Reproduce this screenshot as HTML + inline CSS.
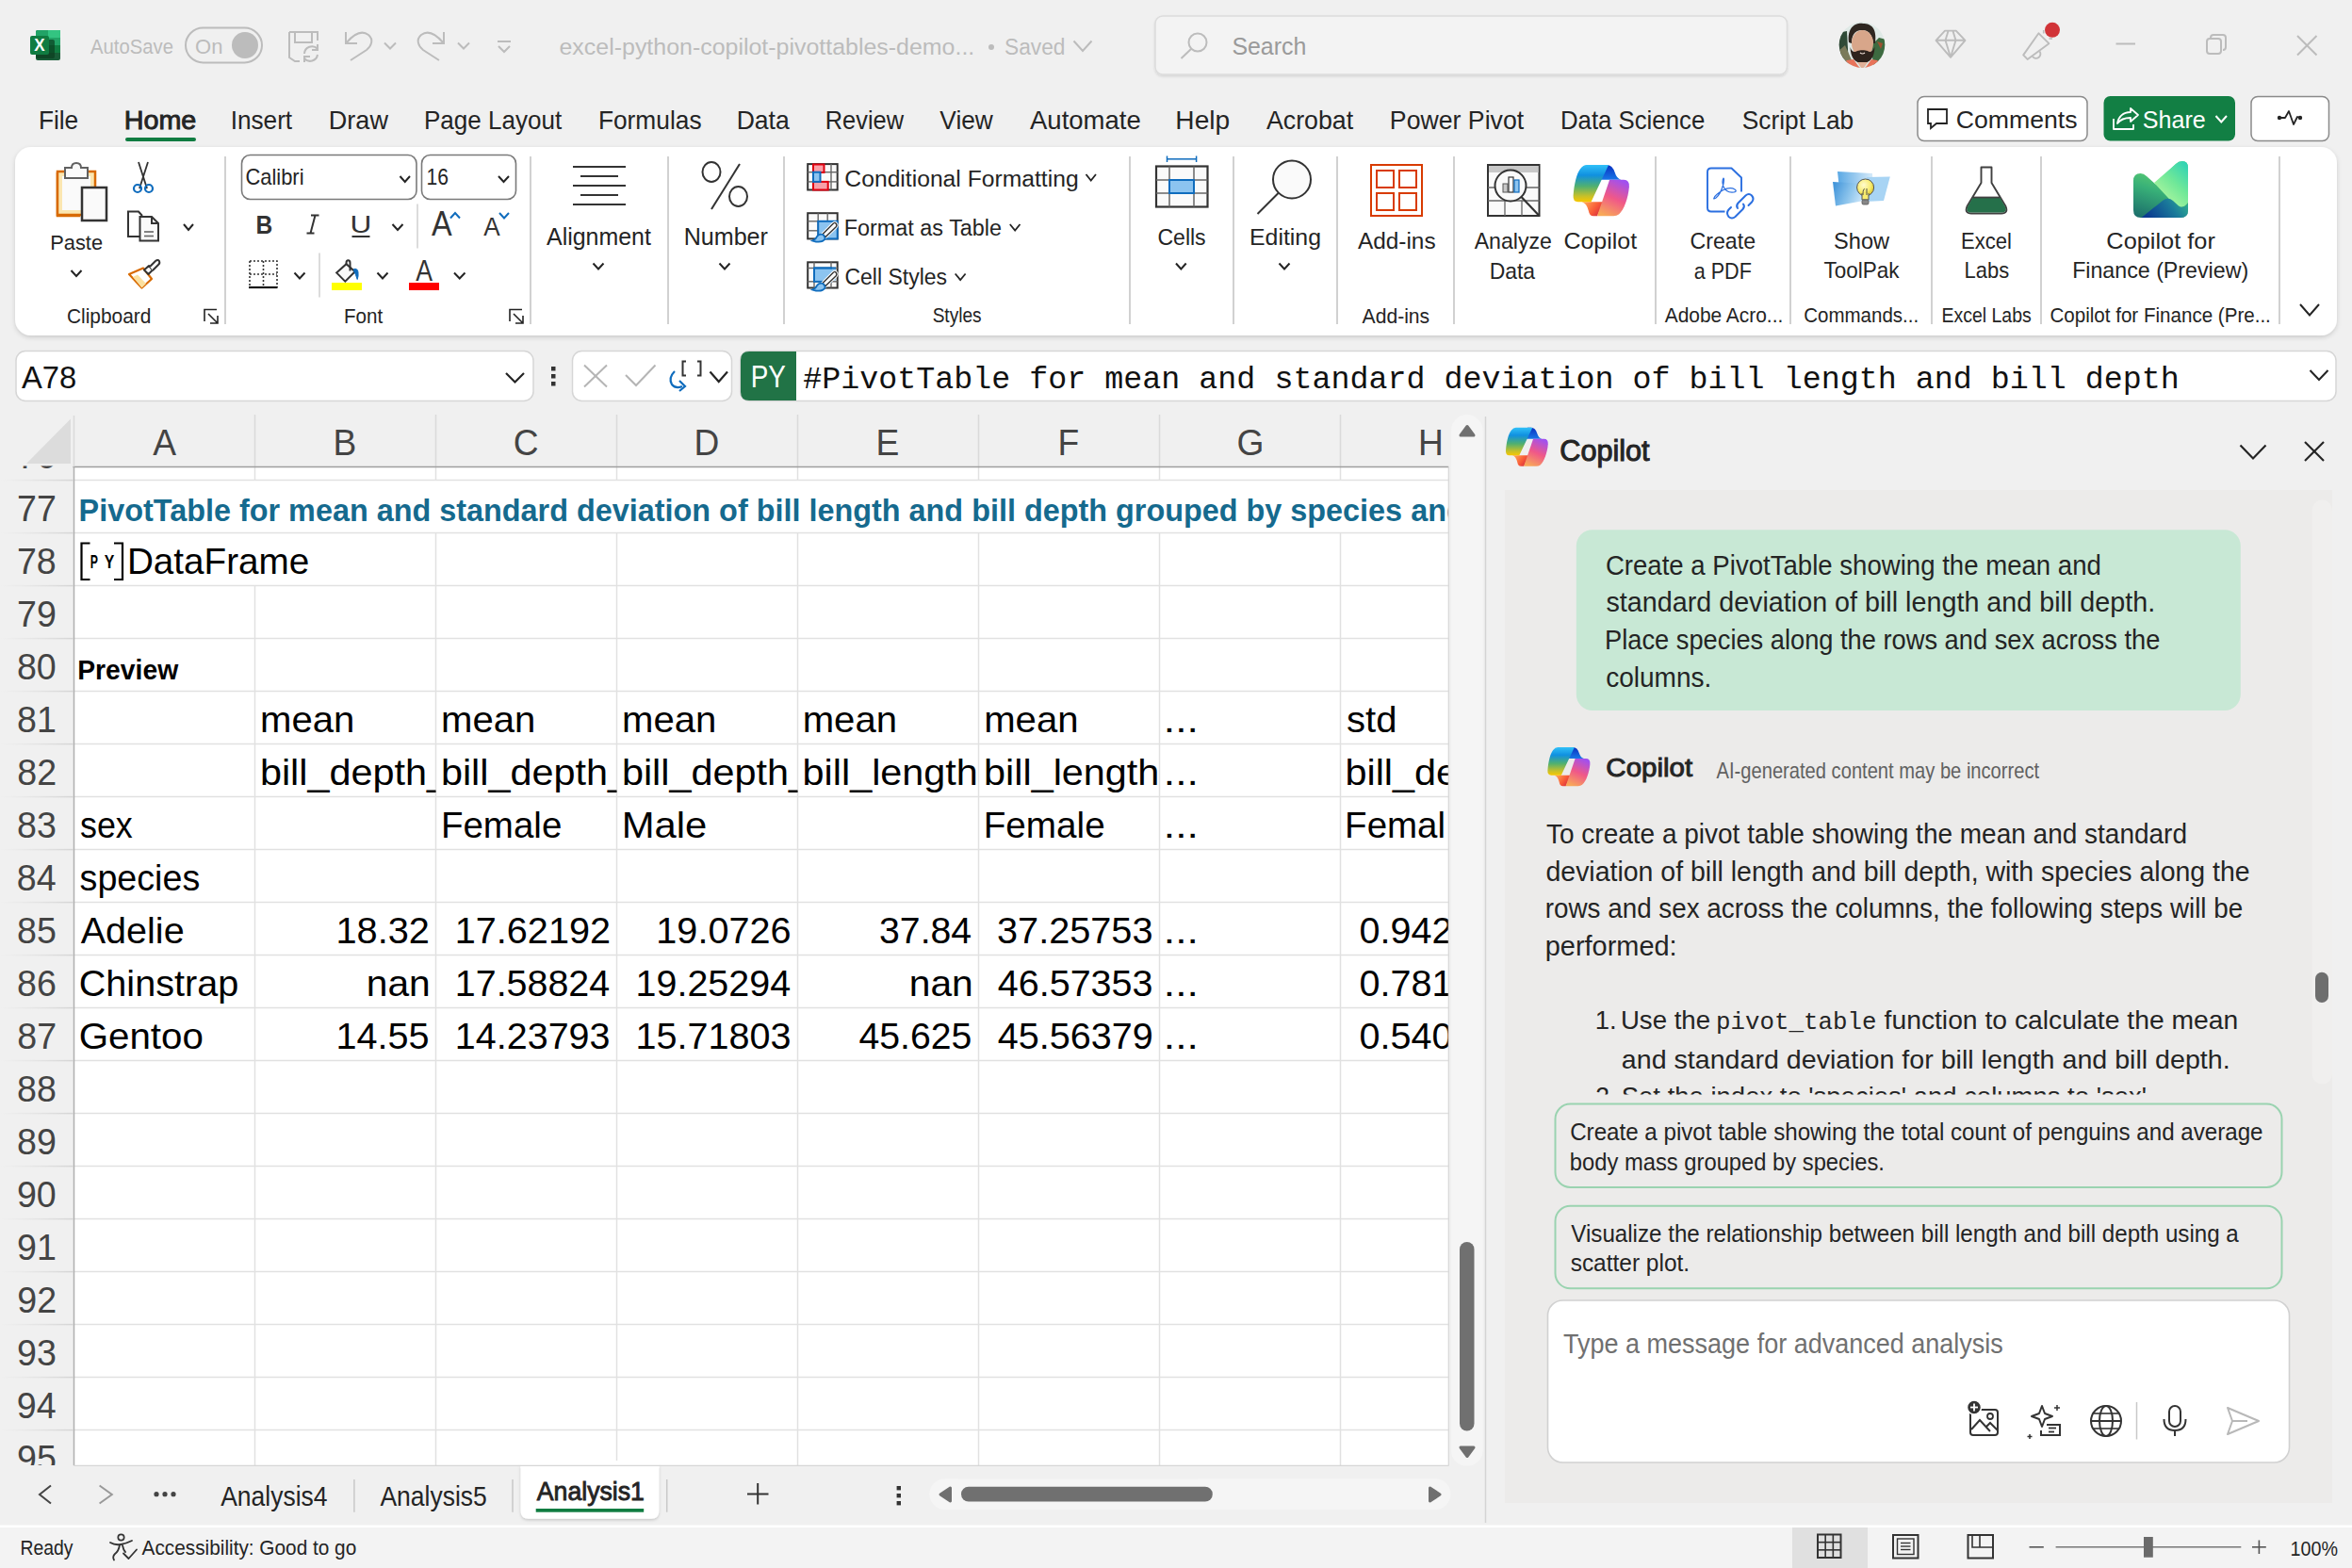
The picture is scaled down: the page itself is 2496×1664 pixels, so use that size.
<!DOCTYPE html>
<html><head><meta charset="utf-8"><title>Excel</title>
<style>html,body{margin:0;padding:0;background:#f0f0f0;overflow:hidden} svg{display:block} text{white-space:pre}</style>
</head><body>
<svg width="2496" height="1664" viewBox="0 0 2496 1664">
<defs>
<linearGradient id="xl1" x1="0" y1="0" x2="0" y2="1"><stop offset="0" stop-color="#21a366"/><stop offset="1" stop-color="#185c37"/></linearGradient>
<filter id="sh1" x="-5%" y="-20%" width="110%" height="160%"><feDropShadow dx="0" dy="1.5" stdDeviation="1" flood-color="#000" flood-opacity="0.12"/></filter>
<clipPath id="avc"><circle cx="1976" cy="47.6" r="24.3"/></clipPath>
<filter id="sh2" x="-2%" y="-10%" width="104%" height="130%"><feDropShadow dx="0" dy="2" stdDeviation="2.5" flood-color="#000" flood-opacity="0.16"/></filter>
<linearGradient id="cpA" gradientUnits="userSpaceOnUse" x1="0" y1="10" x2="0" y2="48.6"><stop offset="0" stop-color="#30c0f8"/><stop offset="0.28" stop-color="#1090e0"/><stop offset="0.58" stop-color="#50b070"/><stop offset="0.85" stop-color="#c8c028"/><stop offset="1" stop-color="#f8c800"/></linearGradient>
<linearGradient id="cpB" gradientUnits="userSpaceOnUse" x1="62" y1="27" x2="45" y2="64"><stop offset="0" stop-color="#a050f0"/><stop offset="0.5" stop-color="#f05888"/><stop offset="1" stop-color="#f8a858"/></linearGradient>
<linearGradient id="cpC" gradientUnits="userSpaceOnUse" x1="22" y1="50" x2="38" y2="62"><stop offset="0" stop-color="#ffa050"/><stop offset="0.6" stop-color="#f85a38"/><stop offset="1" stop-color="#d83040"/></linearGradient>
<linearGradient id="cpD" gradientUnits="userSpaceOnUse" x1="0" y1="10" x2="0" y2="26"><stop offset="0" stop-color="#0a30c0"/><stop offset="1" stop-color="#1878e8"/></linearGradient>
<linearGradient id="tp" x1="0" y1="0" x2="1" y2="0.3"><stop offset="0" stop-color="#3a90d8"/><stop offset="0.6" stop-color="#8cc4ec"/><stop offset="1" stop-color="#c8e4f8"/></linearGradient><linearGradient id="tp2" x1="0" y1="0" x2="1" y2="0"><stop offset="0" stop-color="#5aa8e4"/><stop offset="1" stop-color="#d8ecfa"/></linearGradient><radialGradient id="bulb" cx="0.4" cy="0.35" r="0.7"><stop offset="0" stop-color="#fffbd0"/><stop offset="0.6" stop-color="#f8ec70"/><stop offset="1" stop-color="#d8c020"/></radialGradient>
<linearGradient id="fin1" x1="0.3" y1="0" x2="0" y2="1"><stop offset="0" stop-color="#6ad870"/><stop offset="0.45" stop-color="#38b078"/><stop offset="1" stop-color="#1a6a6a"/></linearGradient><linearGradient id="fin3" x1="1" y1="0" x2="0.3" y2="1"><stop offset="0" stop-color="#28d0b8"/><stop offset="0.5" stop-color="#70e898"/><stop offset="1" stop-color="#b8f8a0"/></linearGradient><linearGradient id="fin2" x1="0" y1="0.5" x2="1" y2="0.2"><stop offset="0" stop-color="#0a3a90"/><stop offset="0.6" stop-color="#1a7a9a"/><stop offset="1" stop-color="#30b090"/></linearGradient>
<clipPath id="gridclip"><rect x="78.5" y="495.5" width="1458.8" height="1059.9"/></clipPath>
<linearGradient id="rhg" x1="0" y1="0" x2="1" y2="0"><stop offset="0" stop-color="#dcdcdc" stop-opacity="0"/><stop offset="1" stop-color="#d4d4d4"/></linearGradient>
<clipPath id="rhclip"><rect x="0" y="494.5" width="78" height="1060.5"/></clipPath>
<clipPath id="c0"><rect x="78.5" y="495.5" width="192.0" height="1059.9"/></clipPath>
<clipPath id="c1"><rect x="270.5" y="495.5" width="192.0" height="1059.9"/></clipPath>
<clipPath id="c2"><rect x="462.5" y="495.5" width="192.0" height="1059.9"/></clipPath>
<clipPath id="c3"><rect x="654.5" y="495.5" width="192.0" height="1059.9"/></clipPath>
<clipPath id="c4"><rect x="846.5" y="495.5" width="192.0" height="1059.9"/></clipPath>
<clipPath id="c5"><rect x="1038.5" y="495.5" width="192.0" height="1059.9"/></clipPath>
<clipPath id="c6"><rect x="1230.5" y="495.5" width="192.0" height="1059.9"/></clipPath>
<clipPath id="c7"><rect x="1422.5" y="495.5" width="192.0" height="1059.9"/></clipPath>
<clipPath id="cH83"><rect x="1422.5" y="495.5" width="110.5" height="1060"/></clipPath>
<clipPath id="cH"><rect x="1422.5" y="495.5" width="114.79999999999995" height="1059.9"/></clipPath>
<filter id="sh3" x="-10%" y="-10%" width="120%" height="140%"><feDropShadow dx="0" dy="1.5" stdDeviation="1.5" flood-color="#000" flood-opacity="0.18"/></filter>
<clipPath id="chatclip"><rect x="1597" y="520" width="1856" height="641"/></clipPath>
<clipPath id="msgclip"><rect x="1597" y="520" width="856" height="641.5"/></clipPath>
</defs>
<rect x="0" y="0" width="2496" height="1664" rx="0" fill="#f0f0f0"/>
<rect x="38" y="32" width="26" height="32" rx="2" fill="#185c37"/>
<rect x="38" y="32" width="26" height="8" rx="2" fill="#21a366"/>
<rect x="51" y="32" width="13" height="8" rx="0" fill="#33c481"/>
<rect x="38" y="40" width="26" height="8" rx="0" fill="#21a366"/>
<rect x="38" y="48" width="26" height="8" rx="0" fill="#107c41"/>
<rect x="38" y="42" width="20" height="20" rx="2" fill="#0b3d20" opacity="0.7"/>
<rect x="32" y="38" width="20" height="20" rx="2" fill="#107c41"/>
<text x="36.33" y="53.50" font-family="'Liberation Sans', sans-serif" font-size="18.84" font-weight="700" fill="#ffffff" textLength="11.38" lengthAdjust="spacingAndGlyphs">X</text>
<text x="96.00" y="57.00" font-family="'Liberation Sans', sans-serif" font-size="22.17" fill="#bcbcbc" textLength="87.94" lengthAdjust="spacingAndGlyphs">AutoSave</text>
<rect x="197" y="29.5" width="81" height="37" rx="18.5" fill="none" stroke="#bcbcbc" stroke-width="2"/>
<text x="207.01" y="57.00" font-family="'Liberation Sans', sans-serif" font-size="22.17" fill="#bcbcbc" textLength="29.40" lengthAdjust="spacingAndGlyphs">On</text>
<circle cx="260" cy="48" r="14" fill="#bcbcbc"/>
<path d="M307 34 L337 34 L337 43 M307 34 L307 61 L313 65 L318 65 M313 34 L313 45 L331 45 L331 34" fill="none" stroke="#bcbcbc" stroke-width="2"/>
<path d="M323 57 A8 8 0 0 1 337 52 M337 47 L337 53 L331 53 M337 58 A8 8 0 0 1 323 62 M323 66 L323 60 L329 60" fill="none" stroke="#bcbcbc" stroke-width="2"/>
<path d="M367 34 L367 46 L379 46 M368 45 C374 38 383 31 391 37 C397 42 394 49 389 53 L372 64" fill="none" stroke="#bcbcbc" stroke-width="2"/>
<path d="M408 45.5 L414.0 51.5 L420 45.5" fill="none" stroke="#bcbcbc" stroke-width="2" stroke-linecap="butt" stroke-linejoin="miter"/>
<path d="M471 34 L471 46 L459 46 M470 45 C464 38 455 31 447 37 C441 42 444 49 449 53 L466 64" fill="none" stroke="#bcbcbc" stroke-width="2"/>
<path d="M486 45.5 L492.0 51.5 L498 45.5" fill="none" stroke="#bcbcbc" stroke-width="2" stroke-linecap="butt" stroke-linejoin="miter"/>
<line x1="528" y1="44" x2="542" y2="44" stroke="#bcbcbc" stroke-width="2"/>
<path d="M529 49 L535.0 55 L541 49" fill="none" stroke="#bcbcbc" stroke-width="2" stroke-linecap="butt" stroke-linejoin="miter"/>
<text x="593.50" y="58.00" font-family="'Liberation Sans', sans-serif" font-size="24.64" fill="#bcbcbc" textLength="440.76" lengthAdjust="spacingAndGlyphs">excel-python-copilot-pivottables-demo...</text>
<circle cx="1052" cy="50" r="3" fill="#bcbcbc"/>
<text x="1065.98" y="57.80" font-family="'Liberation Sans', sans-serif" font-size="24.64" fill="#bcbcbc" textLength="64.52" lengthAdjust="spacingAndGlyphs">Saved</text>
<path d="M1139.5 43.5 L1149.0 54 L1158.5 43.5" fill="none" stroke="#bcbcbc" stroke-width="2" stroke-linecap="butt" stroke-linejoin="miter"/>
<rect x="1226" y="17" width="670.5" height="62" rx="8" fill="#f3f3f3" stroke="#dcdcdc" stroke-width="1.5" filter="url(#sh1)"/>
<circle cx="1271" cy="45" r="9.5" fill="none" stroke="#bcbcbc" stroke-width="2"/>
<line x1="1264" y1="52" x2="1253.5" y2="62" stroke="#bcbcbc" stroke-width="2"/>
<text x="1307.38" y="57.50" font-family="'Liberation Sans', sans-serif" font-size="25.36" fill="#9a9a9a" textLength="78.93" lengthAdjust="spacingAndGlyphs">Search</text>
<g clip-path="url(#avc)"><rect x="1950" y="22" width="52" height="52" fill="#dfe9e6"/><path d="M1950 35 L1960 33 L1962 72 L1950 72 Z" fill="#2f4a36"/><path d="M1950 55 L1958 48 L1966 66 L1950 72 Z" fill="#7a7a5a"/><path d="M1986 48 L1994 40 L2002 42 L2002 72 L1988 72 Z" fill="#3d6a40"/><path d="M1992 44 L1998 46 L1996 52 Z" fill="#a05030"/><path d="M1962 45 C1960 28 1970 24 1977 25 C1986 25 1992 30 1990 46 L1988 46 C1987 38 1984 32 1976 32 C1968 32 1965 38 1965 46 Z" fill="#2e2620"/><ellipse cx="1976.5" cy="46" rx="11.5" ry="14" fill="#d8a68a"/><path d="M1963.5 50 C1964 62 1969 67 1976.5 67 C1984 67 1989 62 1989.5 50 C1987 55 1984 56 1982 54 C1979 53 1974 53 1971 54 C1968 56 1965 55 1963.5 50 Z" fill="#2e231d"/><path d="M1974 56 Q1976.5 58 1979 56" stroke="#f0e0d8" stroke-width="1.2" fill="none"/><path d="M1948 74 L1960 64 L1967 63 L1972 70 L1976 74 Z M2004 74 L1992 64 L1986 63 L1981 70 L1977 74 Z" fill="#e8735a"/><path d="M1971 66 L1976.5 74 L1982 66 Z" fill="#e0b098"/></g>
<path d="M2054.5 42.8 L2064 32.6 L2075.8 32.6 L2085.5 42.8 L2070 60.8 Z M2054.5 42.8 L2085.5 42.8 M2067.5 33 L2064.5 42.8 L2070 60.8 L2075.5 42.8 L2072.5 33" fill="none" stroke="#bcbcbc" stroke-width="1.9" stroke-linejoin="round"/>
<path d="M2147.2 58.4 L2163.5 35.3 L2174.4 46.2 L2151.6 62.9 Z" fill="none" stroke="#bcbcbc" stroke-width="1.9" stroke-linejoin="round"/>
<path d="M2157 60 A4.3 4.3 0 1 0 2164.5 54.5" fill="none" stroke="#bcbcbc" stroke-width="1.9"/>
<line x1="2168.7" y1="32" x2="2168.7" y2="35.5" stroke="#bcbcbc" stroke-width="1.6"/>
<line x1="2174.5" y1="41" x2="2178" y2="41" stroke="#bcbcbc" stroke-width="1.6"/>
<circle cx="2178" cy="31.8" r="8" fill="#d13438"/>
<line x1="2245.5" y1="46.5" x2="2266" y2="46.5" stroke="#bcbcbc" stroke-width="2"/>
<rect x="2342" y="41" width="15" height="16" rx="3" fill="none" stroke="#bcbcbc" stroke-width="2"/>
<path d="M2346 41 L2346 40 Q2346 37 2349 37 L2359 37 Q2362 37 2362 40 L2362 50 Q2362 53 2359 53" fill="none" stroke="#bcbcbc" stroke-width="2"/>
<line x1="2438" y1="38" x2="2458.5" y2="58.5" stroke="#bcbcbc" stroke-width="2"/>
<line x1="2458.5" y1="38" x2="2438" y2="58.5" stroke="#bcbcbc" stroke-width="2"/>
<text x="40.90" y="137.00" font-family="'Liberation Sans', sans-serif" font-size="27.97" fill="#242424" textLength="42.32" lengthAdjust="spacingAndGlyphs">File</text>
<text x="131.70" y="137.00" font-family="'Liberation Sans', sans-serif" font-size="27.97" fill="#242424" textLength="76.67" lengthAdjust="spacingAndGlyphs" stroke="#242424" stroke-width="0.9">Home</text>
<text x="244.64" y="137.00" font-family="'Liberation Sans', sans-serif" font-size="27.97" fill="#242424" textLength="65.52" lengthAdjust="spacingAndGlyphs">Insert</text>
<text x="348.84" y="137.00" font-family="'Liberation Sans', sans-serif" font-size="27.97" fill="#242424" textLength="63.13" lengthAdjust="spacingAndGlyphs">Draw</text>
<text x="449.92" y="137.00" font-family="'Liberation Sans', sans-serif" font-size="27.97" fill="#242424" textLength="146.24" lengthAdjust="spacingAndGlyphs">Page Layout</text>
<text x="634.89" y="137.00" font-family="'Liberation Sans', sans-serif" font-size="27.97" fill="#242424" textLength="109.66" lengthAdjust="spacingAndGlyphs">Formulas</text>
<text x="781.68" y="137.00" font-family="'Liberation Sans', sans-serif" font-size="27.97" fill="#242424" textLength="56.09" lengthAdjust="spacingAndGlyphs">Data</text>
<text x="875.77" y="137.00" font-family="'Liberation Sans', sans-serif" font-size="27.97" fill="#242424" textLength="83.20" lengthAdjust="spacingAndGlyphs">Review</text>
<text x="997.37" y="137.00" font-family="'Liberation Sans', sans-serif" font-size="27.97" fill="#242424" textLength="56.42" lengthAdjust="spacingAndGlyphs">View</text>
<text x="1093.00" y="137.00" font-family="'Liberation Sans', sans-serif" font-size="27.97" fill="#242424" textLength="117.75" lengthAdjust="spacingAndGlyphs">Automate</text>
<text x="1247.35" y="137.00" font-family="'Liberation Sans', sans-serif" font-size="27.97" fill="#242424" textLength="57.82" lengthAdjust="spacingAndGlyphs">Help</text>
<text x="1344.00" y="137.00" font-family="'Liberation Sans', sans-serif" font-size="27.97" fill="#242424" textLength="92.17" lengthAdjust="spacingAndGlyphs">Acrobat</text>
<text x="1474.87" y="137.00" font-family="'Liberation Sans', sans-serif" font-size="27.97" fill="#242424" textLength="142.28" lengthAdjust="spacingAndGlyphs">Power Pivot</text>
<text x="1655.94" y="137.00" font-family="'Liberation Sans', sans-serif" font-size="27.97" fill="#242424" textLength="153.30" lengthAdjust="spacingAndGlyphs">Data Science</text>
<text x="1848.82" y="137.00" font-family="'Liberation Sans', sans-serif" font-size="27.97" fill="#242424" textLength="118.30" lengthAdjust="spacingAndGlyphs">Script Lab</text>
<rect x="133" y="146" width="75" height="4" rx="2" fill="#107c41"/>
<rect x="2035" y="102.5" width="180" height="47" rx="7" fill="#ffffff" stroke="#8a8a8a" stroke-width="1.5"/>
<path d="M2046 116 L2066 116 L2066 131 L2055 131 L2049 136 L2049 131 L2046 131 Z" fill="none" stroke="#242424" stroke-width="1.8" stroke-linejoin="miter"/>
<text x="2075.67" y="135.60" font-family="'Liberation Sans', sans-serif" font-size="25.51" fill="#242424" textLength="128.86" lengthAdjust="spacingAndGlyphs">Comments</text>
<rect x="2232.5" y="102" width="139.5" height="47.5" rx="7" fill="#127f44"/>
<path d="M2243 126 L2243 137 L2264 137 L2264 132 M2247 131 C2248 124 2253 119 2261 119 L2261 115 L2269 122 L2261 129 L2261 125 C2255 125 2250 127 2247 131 Z" fill="none" stroke="#ffffff" stroke-width="1.8" stroke-linejoin="round"/>
<text x="2273.87" y="135.60" font-family="'Liberation Sans', sans-serif" font-size="25.51" fill="#ffffff" textLength="66.95" lengthAdjust="spacingAndGlyphs">Share</text>
<path d="M2351.5 123 L2357.25 129.5 L2363 123" fill="none" stroke="#ffffff" stroke-width="2" stroke-linecap="butt" stroke-linejoin="miter"/>
<rect x="2389" y="102.5" width="82.5" height="47" rx="7" fill="#ffffff" stroke="#8a8a8a" stroke-width="1.5"/>
<path d="M2419 125 L2425 125 L2429 118 L2434 132 L2438 124 L2442 125" fill="none" stroke="#242424" stroke-width="1.8" stroke-linejoin="round"/>
<circle cx="2419" cy="125" r="2.2" fill="#242424"/><circle cx="2441" cy="125" r="2.2" fill="#242424"/>
<rect x="16" y="156" width="2464" height="200" rx="17" fill="#ffffff" filter="url(#sh2)"/>
<line x1="239" y1="166" x2="239" y2="344" stroke="#d1d1d1" stroke-width="2"/>
<line x1="563" y1="166" x2="563" y2="344" stroke="#d1d1d1" stroke-width="2"/>
<line x1="709" y1="166" x2="709" y2="344" stroke="#d1d1d1" stroke-width="2"/>
<line x1="832" y1="166" x2="832" y2="344" stroke="#d1d1d1" stroke-width="2"/>
<line x1="1199" y1="166" x2="1199" y2="344" stroke="#d1d1d1" stroke-width="2"/>
<line x1="1309" y1="166" x2="1309" y2="344" stroke="#d1d1d1" stroke-width="2"/>
<line x1="1419" y1="166" x2="1419" y2="344" stroke="#d1d1d1" stroke-width="2"/>
<line x1="1543" y1="166" x2="1543" y2="344" stroke="#d1d1d1" stroke-width="2"/>
<line x1="1757" y1="166" x2="1757" y2="344" stroke="#d1d1d1" stroke-width="2"/>
<line x1="1900" y1="166" x2="1900" y2="344" stroke="#d1d1d1" stroke-width="2"/>
<line x1="2050" y1="166" x2="2050" y2="344" stroke="#d1d1d1" stroke-width="2"/>
<line x1="2166" y1="166" x2="2166" y2="344" stroke="#d1d1d1" stroke-width="2"/>
<line x1="2419" y1="166" x2="2419" y2="344" stroke="#d1d1d1" stroke-width="2"/>
<text x="70.96" y="343.00" font-family="'Liberation Sans', sans-serif" font-size="21.74" fill="#242424" textLength="89.41" lengthAdjust="spacingAndGlyphs">Clipboard</text>
<text x="364.95" y="343.00" font-family="'Liberation Sans', sans-serif" font-size="21.74" fill="#242424" textLength="41.17" lengthAdjust="spacingAndGlyphs">Font</text>
<text x="989.64" y="342.00" font-family="'Liberation Sans', sans-serif" font-size="21.74" fill="#242424" textLength="51.99" lengthAdjust="spacingAndGlyphs">Styles</text>
<text x="1445.60" y="342.50" font-family="'Liberation Sans', sans-serif" font-size="21.74" fill="#242424" textLength="71.56" lengthAdjust="spacingAndGlyphs">Add-ins</text>
<text x="1766.70" y="342.00" font-family="'Liberation Sans', sans-serif" font-size="21.74" fill="#242424" textLength="125.57" lengthAdjust="spacingAndGlyphs">Adobe Acro...</text>
<text x="1914.28" y="342.30" font-family="'Liberation Sans', sans-serif" font-size="21.74" fill="#242424" textLength="121.90" lengthAdjust="spacingAndGlyphs">Commands...</text>
<text x="2060.44" y="342.30" font-family="'Liberation Sans', sans-serif" font-size="21.74" fill="#242424" textLength="95.27" lengthAdjust="spacingAndGlyphs">Excel Labs</text>
<text x="2175.47" y="342.30" font-family="'Liberation Sans', sans-serif" font-size="21.74" fill="#242424" textLength="234.36" lengthAdjust="spacingAndGlyphs">Copilot for Finance (Pre...</text>
<path d="M217 341 L217 328.5 L230 328.5" fill="none" stroke="#242424" stroke-width="1.6"/>
<path d="M221 333 L231 343 M223 343 L231 343 L231 335" fill="none" stroke="#242424" stroke-width="1.6"/>
<path d="M541 341 L541 328.5 L554 328.5" fill="none" stroke="#242424" stroke-width="1.6"/>
<path d="M545 333 L555 343 M547 343 L555 343 L555 335" fill="none" stroke="#242424" stroke-width="1.6"/>
<path d="M2441 323 L2451.0 334.5 L2461 323" fill="none" stroke="#242424" stroke-width="2" stroke-linecap="butt" stroke-linejoin="miter"/>
<path d="M61 183 L61 229 L84 229 L84 219" fill="none" stroke="#d86a00" stroke-width="2.5"/>
<rect x="61" y="182" width="40" height="46" rx="0" fill="#fbe6b0" stroke="#d86a00" stroke-width="2.5"/>
<rect x="66" y="187" width="30" height="36" rx="0" fill="#fafafa"/>
<path d="M69 178 L69 189 L93 189 L93 178 L86 178 Q86 173 81 173 Q76 173 76 178 Z" fill="#fafafa" stroke="#616161" stroke-width="2"/>
<rect x="87" y="199" width="26" height="35" rx="0" fill="#fafafa" stroke="#333333" stroke-width="2.5"/>
<text x="53.26" y="265.00" font-family="'Liberation Sans', sans-serif" font-size="21.74" fill="#242424" textLength="55.77" lengthAdjust="spacingAndGlyphs">Paste</text>
<path d="M75.5 287 L81.0 293 L86.5 287" fill="none" stroke="#242424" stroke-width="2" stroke-linecap="butt" stroke-linejoin="miter"/>
<path d="M147 172 L156 200 M157 172 L148 200" fill="none" stroke="#333" stroke-width="1.8"/>
<circle cx="146" cy="200" r="4" fill="none" stroke="#0f6cbd" stroke-width="2.2"/><circle cx="158" cy="200" r="4" fill="none" stroke="#0f6cbd" stroke-width="2.2"/>
<path d="M148 251 L136 251 L136 224.5 L147 224.5 L151 229" fill="none" stroke="#333" stroke-width="2"/>
<path d="M148.5 230 L161 230 L168 237 L168 255.5 L148.5 255.5 Z M161 230 L161 237 L168 237" fill="#fafafa" stroke="#333" stroke-width="2"/>
<line x1="153" y1="246" x2="163" y2="246" stroke="#666" stroke-width="1.6"/>
<line x1="153" y1="250.5" x2="163" y2="250.5" stroke="#666" stroke-width="1.6"/>
<path d="M195 238 L200.0 244 L205 238" fill="none" stroke="#242424" stroke-width="2" stroke-linecap="butt" stroke-linejoin="miter"/>
<path d="M137 291 L152 284.5 L161 296 L150.5 305.5 Z" fill="#ffffff" stroke="#d86a00" stroke-width="2.2" stroke-linejoin="round"/>
<path d="M141 294 L150.5 305.5 L155 301 L146 291.5 Z" fill="#fbe0a0"/>
<path d="M153 286.5 L157.5 291 L162 286.5 L158 282 Z" fill="#fafafa" stroke="#333" stroke-width="2" stroke-linejoin="round"/>
<path d="M159 283 L165 277 Q167.5 275 169 277 Q170 279.5 168 281 L162 287" fill="#fafafa" stroke="#333" stroke-width="2" stroke-linejoin="round"/>
<rect x="256.5" y="164.5" width="185.5" height="47" rx="9" fill="#ffffff" stroke="#7a7a7a" stroke-width="1.6"/>
<text x="260.40" y="196.20" font-family="'Liberation Sans', sans-serif" font-size="23.19" fill="#242424" textLength="62.11" lengthAdjust="spacingAndGlyphs">Calibri</text>
<path d="M424.5 187 L429.75 193 L435 187" fill="none" stroke="#242424" stroke-width="2" stroke-linecap="butt" stroke-linejoin="miter"/>
<rect x="447.5" y="164.5" width="100" height="47" rx="9" fill="#ffffff" stroke="#7a7a7a" stroke-width="1.6"/>
<text x="452.42" y="196.20" font-family="'Liberation Sans', sans-serif" font-size="23.19" fill="#242424" textLength="23.48" lengthAdjust="spacingAndGlyphs">16</text>
<path d="M529 187 L534.5 193 L540 187" fill="none" stroke="#242424" stroke-width="2" stroke-linecap="butt" stroke-linejoin="miter"/>
<text x="271.40" y="247.50" font-family="'Liberation Sans', sans-serif" font-size="27.25" font-weight="700" fill="#333" textLength="17.76" lengthAdjust="spacingAndGlyphs">B</text>
<path d="M330 228.5 L338.5 228.5 M325.5 247.5 L333.5 247.5 M334.5 228.5 L329.5 247.5" fill="none" stroke="#333" stroke-width="2"/>
<text x="371.63" y="247.00" font-family="'Liberation Sans', sans-serif" font-size="26.09" fill="#333" textLength="22.81" lengthAdjust="spacingAndGlyphs">U</text>
<line x1="373.5" y1="251" x2="392.5" y2="251" stroke="#333" stroke-width="2"/>
<path d="M416.5 238 L422.0 244 L427.5 238" fill="none" stroke="#242424" stroke-width="2" stroke-linecap="butt" stroke-linejoin="miter"/>
<line x1="443" y1="216.5" x2="443" y2="263.5" stroke="#d1d1d1" stroke-width="1.5"/>
<text x="458.00" y="249.70" font-family="'Liberation Sans', sans-serif" font-size="36.67" fill="#333" textLength="21.67" lengthAdjust="spacingAndGlyphs">A</text>
<path d="M478 231.5 L483.0 226 L488 231.5" fill="none" stroke="#0f6cbd" stroke-width="2" stroke-linecap="butt" stroke-linejoin="miter"/>
<text x="513.30" y="249.70" font-family="'Liberation Sans', sans-serif" font-size="28.55" fill="#333" textLength="17.45" lengthAdjust="spacingAndGlyphs">A</text>
<path d="M530 226 L535.0 231.5 L540 226" fill="none" stroke="#0f6cbd" stroke-width="2" stroke-linecap="butt" stroke-linejoin="miter"/>
<path d="M265 277 L294 277 L294 305 M265 277 L265 305 M265 291 L294 291 M279.5 277 L279.5 305" fill="none" stroke="#333" stroke-width="1.6" stroke-dasharray="2 2"/>
<line x1="264" y1="305" x2="294.5" y2="305" stroke="#111" stroke-width="2.2"/>
<path d="M312.5 289.5 L318.0 295.5 L323.5 289.5" fill="none" stroke="#242424" stroke-width="2" stroke-linecap="butt" stroke-linejoin="miter"/>
<line x1="339" y1="268.5" x2="339" y2="315.5" stroke="#d1d1d1" stroke-width="1.5"/>
<path d="M357.1 289.4 L367.5 280.2 L376.7 288.3 L366.3 298.6 Z" fill="#f8f8f8" stroke="#333" stroke-width="2" stroke-linejoin="miter"/>
<path d="M367.5 280.5 L367.5 279 Q367.5 276.3 369.5 276.3 Q371.5 276.3 371.5 279 L371.5 287.5" fill="none" stroke="#333" stroke-width="2"/>
<path d="M375.5 285.5 Q379.5 284.5 380 289 Q380.5 293 379.2 296.5 Q377.5 291 375.8 288 Z" fill="#0f6cbd" stroke="#0f6cbd" stroke-width="1"/>
<rect x="352" y="300" width="32" height="8" rx="0" fill="#ffff00"/>
<path d="M400.5 289.5 L406.0 295.5 L411.5 289.5" fill="none" stroke="#242424" stroke-width="2" stroke-linecap="butt" stroke-linejoin="miter"/>
<text x="441.30" y="298.00" font-family="'Liberation Sans', sans-serif" font-size="31.30" fill="#333" textLength="17.75" lengthAdjust="spacingAndGlyphs">A</text>
<rect x="434" y="300" width="32" height="8" rx="0" fill="#ff0000"/>
<path d="M482 289.5 L487.75 295.5 L493.5 289.5" fill="none" stroke="#242424" stroke-width="2" stroke-linecap="butt" stroke-linejoin="miter"/>
<line x1="608" y1="177" x2="664" y2="177" stroke="#333" stroke-width="2"/>
<line x1="616" y1="187" x2="656" y2="187" stroke="#333" stroke-width="2"/>
<line x1="608" y1="197" x2="664" y2="197" stroke="#333" stroke-width="2"/>
<line x1="616" y1="207" x2="656" y2="207" stroke="#333" stroke-width="2"/>
<line x1="608" y1="217" x2="664" y2="217" stroke="#333" stroke-width="2"/>
<text x="580.00" y="260.20" font-family="'Liberation Sans', sans-serif" font-size="25.22" fill="#242424" textLength="110.87" lengthAdjust="spacingAndGlyphs">Alignment</text>
<path d="M629.5 279.5 L635.0 285.5 L640.5 279.5" fill="none" stroke="#242424" stroke-width="2" stroke-linecap="butt" stroke-linejoin="miter"/>
<ellipse cx="755" cy="182.5" rx="9.5" ry="10.5" fill="none" stroke="#333" stroke-width="2"/>
<ellipse cx="783.5" cy="208.5" rx="9.5" ry="10.5" fill="none" stroke="#333" stroke-width="2"/>
<line x1="785" y1="174" x2="755" y2="222" stroke="#333" stroke-width="2"/>
<text x="725.69" y="260.20" font-family="'Liberation Sans', sans-serif" font-size="25.22" fill="#242424" textLength="89.23" lengthAdjust="spacingAndGlyphs">Number</text>
<path d="M763.5 279.5 L769.0 285.5 L774.5 279.5" fill="none" stroke="#242424" stroke-width="2" stroke-linecap="butt" stroke-linejoin="miter"/>
<rect x="857.2" y="174.1" width="31.5" height="27.4" rx="0" fill="#fafafa" stroke="#333" stroke-width="2"/>
<line x1="863" y1="174.1" x2="863" y2="201.5" stroke="#666" stroke-width="1.4"/>
<line x1="882" y1="174.1" x2="882" y2="201.5" stroke="#666" stroke-width="1.4"/>
<line x1="857.2" y1="182.7" x2="888.7" y2="182.7" stroke="#666" stroke-width="1.4"/>
<line x1="857.2" y1="192.9" x2="888.7" y2="192.9" stroke="#666" stroke-width="1.4"/>
<rect x="863" y="174.5" width="11.5" height="8.5" rx="0" fill="#f8a0a8" stroke="#e00010" stroke-width="2"/>
<rect x="863" y="192.9" width="15.7" height="8.6" rx="0" fill="#f8a0a8" stroke="#e00010" stroke-width="2"/>
<rect x="863" y="182.7" width="7.5" height="10.2" rx="0" fill="#8cc4f0" stroke="#0f6cbd" stroke-width="2"/>
<text x="896.37" y="197.80" font-family="'Liberation Sans', sans-serif" font-size="24.35" fill="#242424" textLength="248.26" lengthAdjust="spacingAndGlyphs">Conditional Formatting</text>
<path d="M1152.5 185 L1157.75 191.5 L1163 185" fill="none" stroke="#242424" stroke-width="1.8" stroke-linecap="butt" stroke-linejoin="miter"/>
<rect x="857.2" y="226.2" width="31.5" height="27.2" rx="0" fill="#fafafa" stroke="#333" stroke-width="2"/>
<line x1="868.2" y1="226.2" x2="868.2" y2="253.39999999999998" stroke="#666" stroke-width="1.4"/>
<line x1="878.2" y1="226.2" x2="878.2" y2="253.39999999999998" stroke="#666" stroke-width="1.4"/>
<line x1="857.2" y1="234.8" x2="888.7" y2="234.8" stroke="#666" stroke-width="1.4"/>
<line x1="857.2" y1="244.8" x2="888.7" y2="244.8" stroke="#666" stroke-width="1.4"/>
<rect x="868.2" y="234.8" width="20.5" height="18.6" rx="0" fill="#8cc4f0" stroke="#0f6cbd" stroke-width="2"/>
<path d="M887 237 Q889 239 887 241 L876 251.5 L873 248.5 L884 237.5 Q886 235.5 887 237 Z" fill="#fafafa" stroke="#ffffff" stroke-width="3.2"/>
<path d="M887 237 Q889 239 887 241 L876 251.5 L873 248.5 L884 237.5 Q886 235.5 887 237 Z" fill="#fafafa" stroke="#333" stroke-width="1.4"/>
<path d="M873.5 249 Q876 252 875.5 253.5 Q873 257.5 866 256.5 Q863 256 862 255.5 Q866 254 867 251 Q869 247.5 873.5 249 Z" fill="#8cc4f0" stroke="#0f6cbd" stroke-width="1.8"/>
<text x="895.73" y="249.90" font-family="'Liberation Sans', sans-serif" font-size="24.35" fill="#242424" textLength="167.36" lengthAdjust="spacingAndGlyphs">Format as Table</text>
<path d="M1071.8 238 L1077.15 244.5 L1082.5 238" fill="none" stroke="#242424" stroke-width="1.8" stroke-linecap="butt" stroke-linejoin="miter"/>
<rect x="857.2" y="278.3" width="31.5" height="27.2" rx="0" fill="#fafafa" stroke="#333" stroke-width="2"/>
<line x1="864" y1="278.3" x2="864" y2="305.5" stroke="#666" stroke-width="1.4"/>
<line x1="882" y1="278.3" x2="882" y2="305.5" stroke="#666" stroke-width="1.4"/>
<line x1="857.2" y1="284.5" x2="888.7" y2="284.5" stroke="#666" stroke-width="1.4"/>
<line x1="857.2" y1="298.8" x2="888.7" y2="298.8" stroke="#666" stroke-width="1.4"/>
<rect x="864" y="284.5" width="18" height="14.3" rx="0" fill="#8cc4f0" stroke="#0f6cbd" stroke-width="2"/>
<rect x="865" y="285.5" width="22" height="12" rx="0" fill="#8cc4f0"/>
<line x1="864" y1="284.5" x2="887" y2="284.5" stroke="#0f6cbd" stroke-width="2"/>
<path d="M887 289 Q889 291 887 293 L876 303.5 L873 300.5 L884 289.5 Q886 287.5 887 289 Z" fill="#fafafa" stroke="#ffffff" stroke-width="3.2"/>
<path d="M887 289 Q889 291 887 293 L876 303.5 L873 300.5 L884 289.5 Q886 287.5 887 289 Z" fill="#fafafa" stroke="#333" stroke-width="1.4"/>
<path d="M873.5 301 Q876 304 875.5 305.5 Q873 309.5 866 308.5 Q863 308 862 307.5 Q866 306 867 303 Q869 299.5 873.5 301 Z" fill="#8cc4f0" stroke="#0f6cbd" stroke-width="1.8"/>
<text x="896.45" y="302.00" font-family="'Liberation Sans', sans-serif" font-size="24.35" fill="#242424" textLength="108.63" lengthAdjust="spacingAndGlyphs">Cell Styles</text>
<path d="M1013.7 290.5 L1019.15 297 L1024.6 290.5" fill="none" stroke="#242424" stroke-width="1.8" stroke-linecap="butt" stroke-linejoin="miter"/>
<rect x="1227" y="176.5" width="54.5" height="43" rx="0" fill="#fafafa" stroke="#333" stroke-width="2.2"/>
<line x1="1241" y1="176.5" x2="1241" y2="219.5" stroke="#666" stroke-width="1.5"/>
<line x1="1267" y1="176.5" x2="1267" y2="219.5" stroke="#666" stroke-width="1.5"/>
<line x1="1227" y1="191" x2="1281.5" y2="191" stroke="#666" stroke-width="1.5"/>
<line x1="1227" y1="205" x2="1281.5" y2="205" stroke="#666" stroke-width="1.5"/>
<rect x="1241" y="191" width="26" height="14" rx="0" fill="#8cc4f0" stroke="#0f6cbd" stroke-width="2"/>
<line x1="1238.5" y1="168.8" x2="1269.6" y2="168.8" stroke="#0f6cbd" stroke-width="1.5"/>
<line x1="1238.5" y1="165.5" x2="1238.5" y2="172" stroke="#0f6cbd" stroke-width="1.5"/>
<line x1="1269.6" y1="165.5" x2="1269.6" y2="172" stroke="#0f6cbd" stroke-width="1.5"/>
<text x="1228.45" y="259.60" font-family="'Liberation Sans', sans-serif" font-size="23.91" fill="#242424" textLength="51.21" lengthAdjust="spacingAndGlyphs">Cells</text>
<path d="M1248 279.5 L1253.35 285.5 L1258.7 279.5" fill="none" stroke="#242424" stroke-width="2" stroke-linecap="butt" stroke-linejoin="miter"/>
<circle cx="1371" cy="190.5" r="20" fill="#fafafa" stroke="#333" stroke-width="2"/>
<line x1="1356.5" y1="205" x2="1334.5" y2="227" stroke="#333" stroke-width="2"/>
<text x="1326.01" y="259.60" font-family="'Liberation Sans', sans-serif" font-size="23.91" fill="#242424" textLength="75.97" lengthAdjust="spacingAndGlyphs">Editing</text>
<path d="M1357.5 279.5 L1363.0 285.5 L1368.5 279.5" fill="none" stroke="#242424" stroke-width="2" stroke-linecap="butt" stroke-linejoin="miter"/>
<rect x="1455" y="175" width="54" height="54" rx="0" fill="none" stroke="#d83b01" stroke-width="2"/>
<rect x="1461" y="181" width="18" height="18" rx="0" fill="none" stroke="#d83b01" stroke-width="2"/>
<rect x="1485" y="181" width="18" height="18" rx="0" fill="none" stroke="#d83b01" stroke-width="2"/>
<rect x="1461" y="205" width="18" height="18" rx="0" fill="none" stroke="#d83b01" stroke-width="2"/>
<rect x="1485" y="205" width="18" height="18" rx="0" fill="none" stroke="#d83b01" stroke-width="2"/>
<text x="1441.00" y="263.50" font-family="'Liberation Sans', sans-serif" font-size="23.91" fill="#242424" textLength="82.57" lengthAdjust="spacingAndGlyphs">Add-ins</text>
<rect x="1579" y="175" width="54.5" height="54" rx="0" fill="#fafafa" stroke="#333" stroke-width="2"/>
<rect x="1580" y="176" width="52.5" height="7" rx="0" fill="#c8c8c8"/>
<line x1="1579" y1="199" x2="1633.5" y2="199" stroke="#666" stroke-width="1.3"/>
<line x1="1579" y1="213" x2="1633.5" y2="213" stroke="#666" stroke-width="1.3"/>
<line x1="1597" y1="213" x2="1597" y2="229" stroke="#666" stroke-width="1.3"/>
<line x1="1615" y1="213" x2="1615" y2="229" stroke="#666" stroke-width="1.3"/>
<circle cx="1603" cy="197" r="16.5" fill="#fafafa" stroke="#333" stroke-width="2"/>
<line x1="1614.5" y1="209" x2="1633.5" y2="229" stroke="#333" stroke-width="2.2"/>
<rect x="1595" y="195" width="5" height="9" rx="0" fill="#c8c8c8" stroke="#555" stroke-width="1"/>
<rect x="1601" y="188" width="5" height="16" rx="0" fill="#fafafa" stroke="#333" stroke-width="1.2"/>
<rect x="1607" y="191" width="5" height="13" rx="0" fill="#8cc4f0" stroke="#0f6cbd" stroke-width="1.2"/>
<text x="1564.70" y="263.50" font-family="'Liberation Sans', sans-serif" font-size="23.19" fill="#242424" textLength="82.20" lengthAdjust="spacingAndGlyphs">Analyze</text>
<text x="1580.67" y="295.80" font-family="'Liberation Sans', sans-serif" font-size="23.19" fill="#242424" textLength="48.39" lengthAdjust="spacingAndGlyphs">Data</text>
<g transform="translate(1659.46,164.86) scale(1.0138)"><path d="M40 10 L45 10 Q51 10 53.5 18 Q55.5 24.5 60 25.5 L38 25.5 Z" fill="url(#cpD)"/><path d="M19 48.6 L42 48.6 L35 63.6 L31 63.6 Q27 63.6 26 58 Q24 50 19 48.6 Z" fill="url(#cpC)"/><path d="M48 25.5 L63 25.5 Q69 25.5 68.5 33 C67.5 45 63 57 58 61.5 Q55.5 63.6 52 63.6 L35 63.6 Z" fill="url(#cpB)"/><path d="M24 10 L47 10 L28.7 48.6 L15 48.6 Q9.5 48.6 10 42 C11 30 13.5 19 17.5 14 Q20.5 10 24 10 Z" fill="url(#cpA)"/></g>
<text x="1659.45" y="263.50" font-family="'Liberation Sans', sans-serif" font-size="23.19" fill="#242424" textLength="77.75" lengthAdjust="spacingAndGlyphs">Copilot</text>
<path d="M1830.5 224.5 L1816 224.5 Q1812 224.5 1812 220.5 L1812 182.5 Q1812 178.5 1816 178.5 L1837.5 178.5 L1848 188.5 L1848 203.5" fill="none" stroke="#2b6fe0" stroke-width="1.9" stroke-linejoin="round"/>
<path d="M1829 189 Q1827 192 1829 198 Q1832 205 1840 204 Q1844 203 1841 201 Q1836 198 1828 202 Q1820 207 1819 210 Q1818 212 1821 210 Q1826 206 1829 195 Q1830 189 1829 189 Z" fill="none" stroke="#2b6fe0" stroke-width="1.2"/>
<path d="M1855.5 218 L1859 214.5 Q1862 211 1859 207.5 Q1856 204.5 1852.5 207.5 L1844.5 215.5 Q1842 218.5 1844 221" fill="none" stroke="#2b6fe0" stroke-width="2" stroke-linecap="round"/>
<path d="M1837 220 L1834.5 222.5 Q1831.5 226 1834.5 230 Q1838 233 1841.5 230 L1849.5 222 Q1852 219 1850 216.5" fill="none" stroke="#2b6fe0" stroke-width="2" stroke-linecap="round"/>
<text x="1793.44" y="263.50" font-family="'Liberation Sans', sans-serif" font-size="23.19" fill="#242424" textLength="69.64" lengthAdjust="spacingAndGlyphs">Create</text>
<text x="1797.64" y="295.80" font-family="'Liberation Sans', sans-serif" font-size="23.19" fill="#242424" textLength="61.21" lengthAdjust="spacingAndGlyphs">a PDF</text>
<path d="M1950 182 L1987 184 L1988 206 L1953 210 Z" fill="url(#tp2)"/>
<path d="M1981 188 L2005.8 187.5 L1999 213 L1979 214 Z" fill="#a8d4f4"/>
<path d="M1945 193 L1980 195 L1978 213 L1948 218.5 Z" fill="url(#tp)"/>
<circle cx="1979.6" cy="199" r="9" fill="url(#bulb)" stroke="#555" stroke-width="1"/>
<path d="M1976 205 L1976 212 L1983 212 L1983 205" fill="#f8ec70" stroke="#555" stroke-width="1"/>
<rect x="1976" y="212" width="7" height="5" rx="1.5" fill="#888" stroke="#555" stroke-width="0.8"/>
<path d="M1977 207 Q1977 199 1979 201 M1981 207 L1981 200" fill="none" stroke="#444" stroke-width="0.9"/>
<text x="1946.14" y="263.70" font-family="'Liberation Sans', sans-serif" font-size="23.19" fill="#242424" textLength="58.98" lengthAdjust="spacingAndGlyphs">Show</text>
<text x="1935.45" y="295.40" font-family="'Liberation Sans', sans-serif" font-size="23.19" fill="#242424" textLength="80.00" lengthAdjust="spacingAndGlyphs">ToolPak</text>
<path d="M2102.5 177.5 L2113.5 177.5 L2113.5 194 L2128.5 219 Q2131.5 226.5 2124 226.5 L2092 226.5 Q2084.5 226.5 2087.5 219 L2102.5 194 Z" fill="#ffffff" stroke="#404040" stroke-width="1.9" stroke-linejoin="round"/>
<path d="M2093.5 210 L2122.5 210 L2128 219.5 Q2130.5 225.5 2124 225.5 L2092 225.5 Q2085.5 225.5 2088 219.5 Z" fill="#25704a"/>
<line x1="2093.5" y1="209.5" x2="2122.5" y2="209.5" stroke="#404040" stroke-width="1.8"/>
<text x="2080.93" y="263.70" font-family="'Liberation Sans', sans-serif" font-size="23.19" fill="#242424" textLength="54.01" lengthAdjust="spacingAndGlyphs">Excel</text>
<text x="2084.54" y="295.40" font-family="'Liberation Sans', sans-serif" font-size="23.19" fill="#242424" textLength="47.59" lengthAdjust="spacingAndGlyphs">Labs</text>
<path d="M2264 192 Q2264 184 2271.5 184 Q2275 184 2278 187 L2287.5 195.5 L2309 174 Q2312 171 2316 171 Q2322 171 2322 178 L2322 223 Q2322 231 2314 231 L2272 231 Q2264 231 2264 223 Z" fill="url(#fin1)"/>
<path d="M2286 194 L2309 174 Q2312 171 2316 171 Q2322 171 2322 178 L2322 215 Q2318 220.5 2313 219.8 Q2310 219.5 2307 216.5 Z" fill="url(#fin3)"/>
<path d="M2272.5 231 L2295 213 Q2300.7 208.5 2306 213 L2312 218.5 Q2317.5 222 2322 216 L2322 223 Q2322 231 2314 231 Z" fill="url(#fin2)"/>
<text x="2235.33" y="263.70" font-family="'Liberation Sans', sans-serif" font-size="23.19" fill="#242424" textLength="115.52" lengthAdjust="spacingAndGlyphs">Copilot for</text>
<text x="2199.14" y="295.40" font-family="'Liberation Sans', sans-serif" font-size="23.19" fill="#242424" textLength="187.03" lengthAdjust="spacingAndGlyphs">Finance (Preview)</text>
<rect x="17" y="372.5" width="549" height="53" rx="10" fill="#ffffff" stroke="#d6d6d6" stroke-width="1.5"/>
<text x="23.00" y="412.00" font-family="'Liberation Sans', sans-serif" font-size="33.33" fill="#111" textLength="58.29" lengthAdjust="spacingAndGlyphs">A78</text>
<path d="M537 396 L546.5 405.5 L556 396" fill="none" stroke="#242424" stroke-width="2.2" stroke-linecap="butt" stroke-linejoin="miter"/>
<rect x="585" y="389" width="4.5" height="4.5" rx="0" fill="#333"/>
<rect x="585" y="397" width="4.5" height="4.5" rx="0" fill="#333"/>
<rect x="585" y="405" width="4.5" height="4.5" rx="0" fill="#333"/>
<rect x="607.5" y="372.5" width="169" height="53" rx="10" fill="#ffffff" stroke="#d6d6d6" stroke-width="1.5"/>
<line x1="620" y1="387.5" x2="644" y2="410.5" stroke="#b5b5b5" stroke-width="2"/>
<line x1="644" y1="387.5" x2="620" y2="410.5" stroke="#b5b5b5" stroke-width="2"/>
<path d="M664 398 L675 409 L695.5 387.5" fill="none" stroke="#b5b5b5" stroke-width="2"/>
<path d="M716 394 Q709 401 713 408 Q717 413 724 410" fill="none" stroke="#0f6cbd" stroke-width="2.2"/>
<path d="M721 404 L727 410 L721 415" fill="none" stroke="#0f6cbd" stroke-width="2.2"/>
<path d="M728 383.5 L724.5 383.5 L724.5 398.5 L728 398.5 M740 383.5 L743.5 383.5 L743.5 398.5 L740 398.5" fill="none" stroke="#333" stroke-width="2"/>
<path d="M753.5 394.5 L762.75 405 L772 394.5" fill="none" stroke="#242424" stroke-width="2.2" stroke-linecap="butt" stroke-linejoin="miter"/>
<rect x="785.5" y="372.5" width="1693.5" height="53" rx="10" fill="#ffffff" stroke="#d6d6d6" stroke-width="1.5"/>
<path d="M845 373 L845 425 L795 425 Q786 425 786 416 L786 382 Q786 373 795 373 Z" fill="#217346"/>
<text x="796.77" y="410.80" font-family="'Liberation Sans', sans-serif" font-size="33.04" fill="#ffffff" textLength="37.20" lengthAdjust="spacingAndGlyphs">PY</text>
<text x="852.17" y="412.00" font-family="'Liberation Mono', monospace" font-size="33.33" fill="#111" textLength="1460.69" lengthAdjust="spacingAndGlyphs">#PivotTable for mean and standard deviation of bill length and bill depth</text>
<path d="M2451.5 393 L2461.0 403 L2470.5 393" fill="none" stroke="#242424" stroke-width="2" stroke-linecap="butt" stroke-linejoin="miter"/>
<rect x="78.5" y="495.5" width="1458.8" height="1059.9" rx="0" fill="#ffffff"/>
<line x1="78.5" y1="509.6" x2="1537.3" y2="509.6" stroke="#e1e1e1" stroke-width="1.5"/>
<line x1="78.5" y1="565.6" x2="1537.3" y2="565.6" stroke="#e1e1e1" stroke-width="1.5"/>
<line x1="78.5" y1="621.6" x2="1537.3" y2="621.6" stroke="#e1e1e1" stroke-width="1.5"/>
<line x1="78.5" y1="677.6" x2="1537.3" y2="677.6" stroke="#e1e1e1" stroke-width="1.5"/>
<line x1="78.5" y1="733.6" x2="1537.3" y2="733.6" stroke="#e1e1e1" stroke-width="1.5"/>
<line x1="78.5" y1="789.6" x2="1537.3" y2="789.6" stroke="#e1e1e1" stroke-width="1.5"/>
<line x1="78.5" y1="845.6" x2="1537.3" y2="845.6" stroke="#e1e1e1" stroke-width="1.5"/>
<line x1="78.5" y1="901.6" x2="1537.3" y2="901.6" stroke="#e1e1e1" stroke-width="1.5"/>
<line x1="78.5" y1="957.6" x2="1537.3" y2="957.6" stroke="#e1e1e1" stroke-width="1.5"/>
<line x1="78.5" y1="1013.6" x2="1537.3" y2="1013.6" stroke="#e1e1e1" stroke-width="1.5"/>
<line x1="78.5" y1="1069.6" x2="1537.3" y2="1069.6" stroke="#e1e1e1" stroke-width="1.5"/>
<line x1="78.5" y1="1125.6" x2="1537.3" y2="1125.6" stroke="#e1e1e1" stroke-width="1.5"/>
<line x1="78.5" y1="1181.6" x2="1537.3" y2="1181.6" stroke="#e1e1e1" stroke-width="1.5"/>
<line x1="78.5" y1="1237.6" x2="1537.3" y2="1237.6" stroke="#e1e1e1" stroke-width="1.5"/>
<line x1="78.5" y1="1293.6" x2="1537.3" y2="1293.6" stroke="#e1e1e1" stroke-width="1.5"/>
<line x1="78.5" y1="1349.6" x2="1537.3" y2="1349.6" stroke="#e1e1e1" stroke-width="1.5"/>
<line x1="78.5" y1="1405.6" x2="1537.3" y2="1405.6" stroke="#e1e1e1" stroke-width="1.5"/>
<line x1="78.5" y1="1461.6" x2="1537.3" y2="1461.6" stroke="#e1e1e1" stroke-width="1.5"/>
<line x1="78.5" y1="1517.6" x2="1537.3" y2="1517.6" stroke="#e1e1e1" stroke-width="1.5"/>
<line x1="270.5" y1="495.5" x2="270.5" y2="509.6" stroke="#e1e1e1" stroke-width="1.5"/>
<line x1="270.5" y1="621.6" x2="270.5" y2="1555.4" stroke="#e1e1e1" stroke-width="1.5"/>
<line x1="462.5" y1="495.5" x2="462.5" y2="509.6" stroke="#e1e1e1" stroke-width="1.5"/>
<line x1="462.5" y1="565.6" x2="462.5" y2="1555.4" stroke="#e1e1e1" stroke-width="1.5"/>
<line x1="654.5" y1="495.5" x2="654.5" y2="509.6" stroke="#e1e1e1" stroke-width="1.5"/>
<line x1="654.5" y1="565.6" x2="654.5" y2="1555.4" stroke="#e1e1e1" stroke-width="1.5"/>
<line x1="846.5" y1="495.5" x2="846.5" y2="509.6" stroke="#e1e1e1" stroke-width="1.5"/>
<line x1="846.5" y1="565.6" x2="846.5" y2="1555.4" stroke="#e1e1e1" stroke-width="1.5"/>
<line x1="1038.5" y1="495.5" x2="1038.5" y2="509.6" stroke="#e1e1e1" stroke-width="1.5"/>
<line x1="1038.5" y1="565.6" x2="1038.5" y2="1555.4" stroke="#e1e1e1" stroke-width="1.5"/>
<line x1="1230.5" y1="495.5" x2="1230.5" y2="509.6" stroke="#e1e1e1" stroke-width="1.5"/>
<line x1="1230.5" y1="565.6" x2="1230.5" y2="1555.4" stroke="#e1e1e1" stroke-width="1.5"/>
<line x1="1422.5" y1="495.5" x2="1422.5" y2="509.6" stroke="#e1e1e1" stroke-width="1.5"/>
<line x1="1422.5" y1="565.6" x2="1422.5" y2="1555.4" stroke="#e1e1e1" stroke-width="1.5"/>
<line x1="270.5" y1="440" x2="270.5" y2="495" stroke="#dadada" stroke-width="1.5"/>
<line x1="462.5" y1="440" x2="462.5" y2="495" stroke="#dadada" stroke-width="1.5"/>
<line x1="654.5" y1="440" x2="654.5" y2="495" stroke="#dadada" stroke-width="1.5"/>
<line x1="846.5" y1="440" x2="846.5" y2="495" stroke="#dadada" stroke-width="1.5"/>
<line x1="1038.5" y1="440" x2="1038.5" y2="495" stroke="#dadada" stroke-width="1.5"/>
<line x1="1230.5" y1="440" x2="1230.5" y2="495" stroke="#dadada" stroke-width="1.5"/>
<line x1="1422.5" y1="440" x2="1422.5" y2="495" stroke="#dadada" stroke-width="1.5"/>
<line x1="77.5" y1="495.5" x2="1537.3" y2="495.5" stroke="#9e9e9e" stroke-width="1.6"/>
<line x1="78.5" y1="441" x2="78.5" y2="495" stroke="#dadada" stroke-width="1.5"/>
<line x1="78.5" y1="495" x2="78.5" y2="1555.4" stroke="#b0b0b0" stroke-width="1.5"/>
<path d="M28 492 L75 444.5 L75 492 Z" fill="#dcdcdc"/>
<text x="162.14" y="483.00" font-family="'Liberation Sans', sans-serif" font-size="39.13" fill="#444444" textLength="24.80" lengthAdjust="spacingAndGlyphs">A</text>
<text x="353.58" y="483.00" font-family="'Liberation Sans', sans-serif" font-size="39.13" fill="#444444" textLength="24.80" lengthAdjust="spacingAndGlyphs">B</text>
<text x="544.84" y="483.00" font-family="'Liberation Sans', sans-serif" font-size="39.13" fill="#444444" textLength="26.85" lengthAdjust="spacingAndGlyphs">C</text>
<text x="736.47" y="483.00" font-family="'Liberation Sans', sans-serif" font-size="39.13" fill="#444444" textLength="26.85" lengthAdjust="spacingAndGlyphs">D</text>
<text x="929.40" y="483.00" font-family="'Liberation Sans', sans-serif" font-size="39.13" fill="#444444" textLength="24.80" lengthAdjust="spacingAndGlyphs">E</text>
<text x="1122.42" y="483.00" font-family="'Liberation Sans', sans-serif" font-size="39.13" fill="#444444" textLength="22.71" lengthAdjust="spacingAndGlyphs">F</text>
<text x="1312.47" y="483.00" font-family="'Liberation Sans', sans-serif" font-size="39.13" fill="#444444" textLength="28.91" lengthAdjust="spacingAndGlyphs">G</text>
<text x="1505.12" y="483.00" font-family="'Liberation Sans', sans-serif" font-size="39.13" fill="#444444" textLength="26.85" lengthAdjust="spacingAndGlyphs">H</text>
<text x="17.92" y="496.60" font-family="'Liberation Sans', sans-serif" font-size="38.41" fill="#444444" textLength="41.87" lengthAdjust="spacingAndGlyphs" clip-path="url(#rhclip)">76</text>
<rect x="0" y="508.85" width="78" height="1.5" rx="0" fill="url(#rhg)"/>
<text x="18.11" y="552.60" font-family="'Liberation Sans', sans-serif" font-size="38.41" fill="#444444" textLength="41.87" lengthAdjust="spacingAndGlyphs" clip-path="url(#rhclip)">77</text>
<rect x="0" y="564.85" width="78" height="1.5" rx="0" fill="url(#rhg)"/>
<text x="17.92" y="608.60" font-family="'Liberation Sans', sans-serif" font-size="38.41" fill="#444444" textLength="41.87" lengthAdjust="spacingAndGlyphs" clip-path="url(#rhclip)">78</text>
<rect x="0" y="620.85" width="78" height="1.5" rx="0" fill="url(#rhg)"/>
<text x="18.02" y="664.60" font-family="'Liberation Sans', sans-serif" font-size="38.41" fill="#444444" textLength="41.87" lengthAdjust="spacingAndGlyphs" clip-path="url(#rhclip)">79</text>
<rect x="0" y="676.85" width="78" height="1.5" rx="0" fill="url(#rhg)"/>
<text x="17.92" y="720.60" font-family="'Liberation Sans', sans-serif" font-size="38.41" fill="#444444" textLength="41.87" lengthAdjust="spacingAndGlyphs" clip-path="url(#rhclip)">80</text>
<rect x="0" y="732.85" width="78" height="1.5" rx="0" fill="url(#rhg)"/>
<text x="18.11" y="776.60" font-family="'Liberation Sans', sans-serif" font-size="38.41" fill="#444444" textLength="41.87" lengthAdjust="spacingAndGlyphs" clip-path="url(#rhclip)">81</text>
<rect x="0" y="788.85" width="78" height="1.5" rx="0" fill="url(#rhg)"/>
<text x="18.21" y="832.60" font-family="'Liberation Sans', sans-serif" font-size="38.41" fill="#444444" textLength="41.87" lengthAdjust="spacingAndGlyphs" clip-path="url(#rhclip)">82</text>
<rect x="0" y="844.85" width="78" height="1.5" rx="0" fill="url(#rhg)"/>
<text x="18.02" y="888.60" font-family="'Liberation Sans', sans-serif" font-size="38.41" fill="#444444" textLength="41.87" lengthAdjust="spacingAndGlyphs" clip-path="url(#rhclip)">83</text>
<rect x="0" y="900.85" width="78" height="1.5" rx="0" fill="url(#rhg)"/>
<text x="17.83" y="944.60" font-family="'Liberation Sans', sans-serif" font-size="38.41" fill="#444444" textLength="41.87" lengthAdjust="spacingAndGlyphs" clip-path="url(#rhclip)">84</text>
<rect x="0" y="956.85" width="78" height="1.5" rx="0" fill="url(#rhg)"/>
<text x="18.02" y="1000.60" font-family="'Liberation Sans', sans-serif" font-size="38.41" fill="#444444" textLength="41.87" lengthAdjust="spacingAndGlyphs" clip-path="url(#rhclip)">85</text>
<rect x="0" y="1012.85" width="78" height="1.5" rx="0" fill="url(#rhg)"/>
<text x="18.02" y="1056.60" font-family="'Liberation Sans', sans-serif" font-size="38.41" fill="#444444" textLength="41.87" lengthAdjust="spacingAndGlyphs" clip-path="url(#rhclip)">86</text>
<rect x="0" y="1068.85" width="78" height="1.5" rx="0" fill="url(#rhg)"/>
<text x="18.21" y="1112.60" font-family="'Liberation Sans', sans-serif" font-size="38.41" fill="#444444" textLength="41.87" lengthAdjust="spacingAndGlyphs" clip-path="url(#rhclip)">87</text>
<rect x="0" y="1124.85" width="78" height="1.5" rx="0" fill="url(#rhg)"/>
<text x="18.02" y="1168.60" font-family="'Liberation Sans', sans-serif" font-size="38.41" fill="#444444" textLength="41.87" lengthAdjust="spacingAndGlyphs" clip-path="url(#rhclip)">88</text>
<rect x="0" y="1180.85" width="78" height="1.5" rx="0" fill="url(#rhg)"/>
<text x="18.11" y="1224.60" font-family="'Liberation Sans', sans-serif" font-size="38.41" fill="#444444" textLength="41.87" lengthAdjust="spacingAndGlyphs" clip-path="url(#rhclip)">89</text>
<rect x="0" y="1236.85" width="78" height="1.5" rx="0" fill="url(#rhg)"/>
<text x="17.92" y="1280.60" font-family="'Liberation Sans', sans-serif" font-size="38.41" fill="#444444" textLength="41.87" lengthAdjust="spacingAndGlyphs" clip-path="url(#rhclip)">90</text>
<rect x="0" y="1292.85" width="78" height="1.5" rx="0" fill="url(#rhg)"/>
<text x="18.11" y="1336.60" font-family="'Liberation Sans', sans-serif" font-size="38.41" fill="#444444" textLength="41.87" lengthAdjust="spacingAndGlyphs" clip-path="url(#rhclip)">91</text>
<rect x="0" y="1348.85" width="78" height="1.5" rx="0" fill="url(#rhg)"/>
<text x="18.21" y="1392.60" font-family="'Liberation Sans', sans-serif" font-size="38.41" fill="#444444" textLength="41.87" lengthAdjust="spacingAndGlyphs" clip-path="url(#rhclip)">92</text>
<rect x="0" y="1404.85" width="78" height="1.5" rx="0" fill="url(#rhg)"/>
<text x="18.02" y="1448.60" font-family="'Liberation Sans', sans-serif" font-size="38.41" fill="#444444" textLength="41.87" lengthAdjust="spacingAndGlyphs" clip-path="url(#rhclip)">93</text>
<rect x="0" y="1460.85" width="78" height="1.5" rx="0" fill="url(#rhg)"/>
<text x="17.83" y="1504.60" font-family="'Liberation Sans', sans-serif" font-size="38.41" fill="#444444" textLength="41.87" lengthAdjust="spacingAndGlyphs" clip-path="url(#rhclip)">94</text>
<rect x="0" y="1516.85" width="78" height="1.5" rx="0" fill="url(#rhg)"/>
<text x="18.02" y="1560.60" font-family="'Liberation Sans', sans-serif" font-size="38.41" fill="#444444" textLength="41.87" lengthAdjust="spacingAndGlyphs" clip-path="url(#rhclip)">95</text>
<text x="83.60" y="552.80" font-family="'Liberation Sans', sans-serif" font-size="32.90" font-weight="700" fill="#156a8e" textLength="1534.13" lengthAdjust="spacingAndGlyphs" clip-path="url(#gridclip)">PivotTable for mean and standard deviation of bill length and bill depth grouped by species and sex</text>
<path d="M95.5 576.5 L86.5 576.5 L86.5 615 L95.5 615 M121 576.5 L130 576.5 L130 615 L121 615" fill="none" stroke="#000" stroke-width="2.2"/>
<text x="95.70" y="602.80" font-family="'Liberation Sans', sans-serif" font-size="19.57" font-weight="700" fill="#000" textLength="8.19" lengthAdjust="spacingAndGlyphs">P</text>
<text x="110.68" y="602.80" font-family="'Liberation Sans', sans-serif" font-size="19.57" font-weight="700" fill="#000" textLength="10.59" lengthAdjust="spacingAndGlyphs">Y</text>
<text x="134.91" y="608.80" font-family="'Liberation Sans', sans-serif" font-size="38.84" fill="#000000" textLength="193.40" lengthAdjust="spacingAndGlyphs">DataFrame</text>
<text x="82.16" y="720.80" font-family="'Liberation Sans', sans-serif" font-size="28.70" font-weight="700" fill="#000000" textLength="107.11" lengthAdjust="spacingAndGlyphs">Preview</text>
<text x="275.99" y="776.80" font-family="'Liberation Sans', sans-serif" font-size="38.84" fill="#000000" textLength="100.38" lengthAdjust="spacingAndGlyphs">mean</text>
<text x="467.99" y="776.80" font-family="'Liberation Sans', sans-serif" font-size="38.84" fill="#000000" textLength="100.38" lengthAdjust="spacingAndGlyphs">mean</text>
<text x="659.99" y="776.80" font-family="'Liberation Sans', sans-serif" font-size="38.84" fill="#000000" textLength="100.38" lengthAdjust="spacingAndGlyphs">mean</text>
<text x="851.69" y="776.80" font-family="'Liberation Sans', sans-serif" font-size="38.84" fill="#000000" textLength="100.38" lengthAdjust="spacingAndGlyphs">mean</text>
<text x="1044.19" y="776.80" font-family="'Liberation Sans', sans-serif" font-size="38.84" fill="#000000" textLength="100.38" lengthAdjust="spacingAndGlyphs">mean</text>
<text x="1234.80" y="776.80" font-family="'Liberation Sans', sans-serif" font-size="38.84" fill="#000000" textLength="37.06" lengthAdjust="spacingAndGlyphs">...</text>
<text x="1429.00" y="776.80" font-family="'Liberation Sans', sans-serif" font-size="38.84" fill="#000000" textLength="53.47" lengthAdjust="spacingAndGlyphs" clip-path="url(#cH)">std</text>
<text x="275.91" y="832.80" font-family="'Liberation Sans', sans-serif" font-size="38.84" fill="#000000" textLength="200.03" lengthAdjust="spacingAndGlyphs" clip-path="url(#c1)">bill_depth_</text>
<text x="467.91" y="832.80" font-family="'Liberation Sans', sans-serif" font-size="38.84" fill="#000000" textLength="200.03" lengthAdjust="spacingAndGlyphs" clip-path="url(#c2)">bill_depth_</text>
<text x="659.91" y="832.80" font-family="'Liberation Sans', sans-serif" font-size="38.84" fill="#000000" textLength="200.03" lengthAdjust="spacingAndGlyphs" clip-path="url(#c3)">bill_depth_</text>
<text x="851.61" y="832.80" font-family="'Liberation Sans', sans-serif" font-size="38.84" fill="#000000" textLength="186.22" lengthAdjust="spacingAndGlyphs" clip-path="url(#c4)">bill_length</text>
<text x="1044.11" y="832.80" font-family="'Liberation Sans', sans-serif" font-size="38.84" fill="#000000" textLength="186.22" lengthAdjust="spacingAndGlyphs" clip-path="url(#c5)">bill_length</text>
<text x="1234.80" y="832.80" font-family="'Liberation Sans', sans-serif" font-size="38.84" fill="#000000" textLength="37.06" lengthAdjust="spacingAndGlyphs">...</text>
<text x="1427.51" y="832.80" font-family="'Liberation Sans', sans-serif" font-size="38.84" fill="#000000" textLength="200.03" lengthAdjust="spacingAndGlyphs" clip-path="url(#cH)">bill_depth_</text>
<text x="85.02" y="888.80" font-family="'Liberation Sans', sans-serif" font-size="38.84" fill="#000000" textLength="55.78" lengthAdjust="spacingAndGlyphs">sex</text>
<text x="467.92" y="888.80" font-family="'Liberation Sans', sans-serif" font-size="38.84" fill="#000000" textLength="128.40" lengthAdjust="spacingAndGlyphs">Female</text>
<text x="659.65" y="888.80" font-family="'Liberation Sans', sans-serif" font-size="38.84" fill="#000000" textLength="90.63" lengthAdjust="spacingAndGlyphs">Male</text>
<text x="1043.70" y="888.80" font-family="'Liberation Sans', sans-serif" font-size="38.84" fill="#000000" textLength="129.02" lengthAdjust="spacingAndGlyphs">Female</text>
<text x="1234.80" y="888.80" font-family="'Liberation Sans', sans-serif" font-size="38.84" fill="#000000" textLength="37.06" lengthAdjust="spacingAndGlyphs">...</text>
<text x="1427.12" y="888.80" font-family="'Liberation Sans', sans-serif" font-size="38.84" fill="#000000" textLength="128.40" lengthAdjust="spacingAndGlyphs" clip-path="url(#cH83)">Female</text>
<text x="84.57" y="944.80" font-family="'Liberation Sans', sans-serif" font-size="38.84" fill="#000000" textLength="127.67" lengthAdjust="spacingAndGlyphs">species</text>
<text x="85.70" y="1000.80" font-family="'Liberation Sans', sans-serif" font-size="38.84" fill="#000000" textLength="109.98" lengthAdjust="spacingAndGlyphs">Adelie</text>
<text x="83.72" y="1056.80" font-family="'Liberation Sans', sans-serif" font-size="38.84" fill="#000000" textLength="169.56" lengthAdjust="spacingAndGlyphs">Chinstrap</text>
<text x="83.68" y="1112.80" font-family="'Liberation Sans', sans-serif" font-size="38.84" fill="#000000" textLength="132.24" lengthAdjust="spacingAndGlyphs">Gentoo</text>
<text x="356.52" y="1000.80" font-family="'Liberation Sans', sans-serif" font-size="38.84" fill="#000000" textLength="99.47" lengthAdjust="spacingAndGlyphs">18.32</text>
<text x="482.83" y="1000.80" font-family="'Liberation Sans', sans-serif" font-size="38.84" fill="#000000" textLength="165.09" lengthAdjust="spacingAndGlyphs">17.62192</text>
<text x="696.33" y="1000.80" font-family="'Liberation Sans', sans-serif" font-size="38.84" fill="#000000" textLength="143.15" lengthAdjust="spacingAndGlyphs">19.0726</text>
<text x="933.03" y="1000.80" font-family="'Liberation Sans', sans-serif" font-size="38.84" fill="#000000" textLength="98.14" lengthAdjust="spacingAndGlyphs">37.84</text>
<text x="1058.01" y="1000.80" font-family="'Liberation Sans', sans-serif" font-size="38.84" fill="#000000" textLength="165.51" lengthAdjust="spacingAndGlyphs">37.25753</text>
<text x="1234.80" y="1000.80" font-family="'Liberation Sans', sans-serif" font-size="38.84" fill="#000000" textLength="37.06" lengthAdjust="spacingAndGlyphs">...</text>
<text x="388.75" y="1056.80" font-family="'Liberation Sans', sans-serif" font-size="38.84" fill="#000000" textLength="67.94" lengthAdjust="spacingAndGlyphs">nan</text>
<text x="482.85" y="1056.80" font-family="'Liberation Sans', sans-serif" font-size="38.84" fill="#000000" textLength="164.28" lengthAdjust="spacingAndGlyphs">17.58824</text>
<text x="674.64" y="1056.80" font-family="'Liberation Sans', sans-serif" font-size="38.84" fill="#000000" textLength="164.48" lengthAdjust="spacingAndGlyphs">19.25294</text>
<text x="964.75" y="1056.80" font-family="'Liberation Sans', sans-serif" font-size="38.84" fill="#000000" textLength="67.94" lengthAdjust="spacingAndGlyphs">nan</text>
<text x="1058.81" y="1056.80" font-family="'Liberation Sans', sans-serif" font-size="38.84" fill="#000000" textLength="164.71" lengthAdjust="spacingAndGlyphs">46.57353</text>
<text x="1234.80" y="1056.80" font-family="'Liberation Sans', sans-serif" font-size="38.84" fill="#000000" textLength="37.06" lengthAdjust="spacingAndGlyphs">...</text>
<text x="356.53" y="1112.80" font-family="'Liberation Sans', sans-serif" font-size="38.84" fill="#000000" textLength="99.05" lengthAdjust="spacingAndGlyphs">14.55</text>
<text x="482.84" y="1112.80" font-family="'Liberation Sans', sans-serif" font-size="38.84" fill="#000000" textLength="164.68" lengthAdjust="spacingAndGlyphs">14.23793</text>
<text x="674.64" y="1112.80" font-family="'Liberation Sans', sans-serif" font-size="38.84" fill="#000000" textLength="164.89" lengthAdjust="spacingAndGlyphs">15.71803</text>
<text x="911.52" y="1112.80" font-family="'Liberation Sans', sans-serif" font-size="38.84" fill="#000000" textLength="119.90" lengthAdjust="spacingAndGlyphs">45.625</text>
<text x="1058.81" y="1112.80" font-family="'Liberation Sans', sans-serif" font-size="38.84" fill="#000000" textLength="164.91" lengthAdjust="spacingAndGlyphs">45.56379</text>
<text x="1234.80" y="1112.80" font-family="'Liberation Sans', sans-serif" font-size="38.84" fill="#000000" textLength="37.06" lengthAdjust="spacingAndGlyphs">...</text>
<text x="1442.62" y="1000.80" font-family="'Liberation Sans', sans-serif" font-size="38.84" fill="#000000" textLength="142.90" lengthAdjust="spacingAndGlyphs" clip-path="url(#cH)">0.94264</text>
<text x="1442.62" y="1056.80" font-family="'Liberation Sans', sans-serif" font-size="38.84" fill="#000000" textLength="142.90" lengthAdjust="spacingAndGlyphs" clip-path="url(#cH)">0.78125</text>
<text x="1442.62" y="1112.80" font-family="'Liberation Sans', sans-serif" font-size="38.84" fill="#000000" textLength="142.90" lengthAdjust="spacingAndGlyphs" clip-path="url(#cH)">0.54014</text>
<rect x="1540" y="440" width="33.5" height="1116" rx="16.75" fill="#f5f5f5"/>
<path d="M1557 452.5 L1564 462 L1550 462 Z" fill="#707070" stroke="#707070" stroke-width="3" stroke-linejoin="round"/>
<path d="M1550 1536 L1564 1536 L1557 1545.5 Z" fill="#707070" stroke="#707070" stroke-width="3" stroke-linejoin="round"/>
<rect x="1549" y="1318" width="15.5" height="200.5" rx="7.75" fill="#707070"/>
<rect x="0" y="1555.4" width="1576" height="63.6" rx="0" fill="#f0f0f0"/>
<path d="M552.5 1555 L552.5 1603 Q552.5 1611.7 561 1611.7 L691 1611.7 Q699.4 1611.7 699.4 1603 L699.4 1555 Z" fill="#ffffff" filter="url(#sh3)"/>
<rect x="552.5" y="1550" width="147" height="8" rx="0" fill="#ffffff"/>
<path d="M54 1576.5 L42 1586 L54 1595.5" fill="none" stroke="#444" stroke-width="2"/>
<path d="M105.6 1576.5 L118.8 1586 L105.6 1595.5" fill="none" stroke="#999" stroke-width="2"/>
<circle cx="166" cy="1585.7" r="2.6" fill="#444"/>
<circle cx="175" cy="1585.7" r="2.6" fill="#444"/>
<circle cx="184" cy="1585.7" r="2.6" fill="#444"/>
<text x="234.20" y="1598.00" font-family="'Liberation Sans', sans-serif" font-size="28.99" fill="#242424" textLength="113.39" lengthAdjust="spacingAndGlyphs">Analysis4</text>
<line x1="375.9" y1="1570" x2="375.9" y2="1604.7" stroke="#c8c8c8" stroke-width="1.5"/>
<text x="403.40" y="1598.00" font-family="'Liberation Sans', sans-serif" font-size="28.99" fill="#242424" textLength="113.46" lengthAdjust="spacingAndGlyphs">Analysis5</text>
<line x1="544" y1="1570" x2="544" y2="1604.7" stroke="#c8c8c8" stroke-width="1.5"/>
<text x="569.80" y="1591.80" font-family="'Liberation Sans', sans-serif" font-size="28.26" fill="#242424" textLength="114.10" lengthAdjust="spacingAndGlyphs" stroke="#242424" stroke-width="0.9">Analysis1</text>
<rect x="568.7" y="1601" width="114.5" height="3.7" rx="0" fill="#107c41"/>
<line x1="707.7" y1="1570" x2="707.7" y2="1604.7" stroke="#c8c8c8" stroke-width="1.5"/>
<line x1="793" y1="1585.5" x2="815.5" y2="1585.5" stroke="#333" stroke-width="2"/>
<line x1="804.2" y1="1574" x2="804.2" y2="1596.5" stroke="#333" stroke-width="2"/>
<rect x="951.6" y="1577" width="4.4" height="4.4" rx="0" fill="#333"/>
<rect x="951.6" y="1585" width="4.4" height="4.4" rx="0" fill="#333"/>
<rect x="951.6" y="1593" width="4.4" height="4.4" rx="0" fill="#333"/>
<rect x="986.4" y="1569.2" width="553" height="32.8" rx="16.4" fill="#f5f5f5"/>
<path d="M1008.5 1579 L998 1586 L1008.5 1593 Z" fill="#707070" stroke="#707070" stroke-width="3" stroke-linejoin="round"/>
<rect x="1020" y="1577.8" width="266.8" height="15.7" rx="7.85" fill="#707070"/>
<path d="M1517.5 1579 L1528 1586 L1517.5 1593 Z" fill="#707070" stroke="#707070" stroke-width="3" stroke-linejoin="round"/>
<rect x="0" y="1619" width="2496" height="45" rx="0" fill="#f3f3f3"/>
<rect x="0" y="1618.5" width="2496" height="2.5" rx="0" fill="#ffffff"/>
<text x="21.45" y="1650.00" font-family="'Liberation Sans', sans-serif" font-size="22.17" fill="#242424" textLength="55.96" lengthAdjust="spacingAndGlyphs">Ready</text>
<circle cx="128.5" cy="1631.5" r="3.2" fill="none" stroke="#333" stroke-width="1.7"/>
<path d="M117 1637 Q122 1640 128 1639 Q134 1638 140 1635" fill="none" stroke="#333" stroke-width="1.8" stroke-linecap="round"/>
<path d="M127 1639.5 Q126 1646 122 1649 Q119 1652 121 1655.5" fill="none" stroke="#333" stroke-width="1.8" stroke-linecap="round"/>
<path d="M130 1640 Q131 1645 133 1647" fill="none" stroke="#333" stroke-width="1.8" stroke-linecap="round"/>
<path d="M131 1648.5 L136.5 1654 L145 1644.5" fill="none" stroke="#333" stroke-width="1.8" stroke-linecap="round" stroke-linejoin="round"/>
<text x="150.60" y="1650.00" font-family="'Liberation Sans', sans-serif" font-size="22.17" fill="#242424" textLength="227.63" lengthAdjust="spacingAndGlyphs">Accessibility: Good to go</text>
<rect x="1902" y="1621" width="80" height="43" rx="0" fill="#e0e0e0"/>
<rect x="1929" y="1628.5" width="24.5" height="24.5" rx="0" fill="none" stroke="#333" stroke-width="2"/>
<line x1="1937.1666666666667" y1="1628.5" x2="1937.1666666666667" y2="1653" stroke="#333" stroke-width="1.6"/>
<line x1="1929" y1="1636.6666666666667" x2="1953.5" y2="1636.6666666666667" stroke="#333" stroke-width="1.6"/>
<line x1="1945.3333333333333" y1="1628.5" x2="1945.3333333333333" y2="1653" stroke="#333" stroke-width="1.6"/>
<line x1="1929" y1="1644.8333333333333" x2="1953.5" y2="1644.8333333333333" stroke="#333" stroke-width="1.6"/>
<rect x="2009" y="1629" width="26.5" height="24.5" rx="0" fill="none" stroke="#333" stroke-width="2"/>
<rect x="2013.5" y="1633" width="17.5" height="16.5" rx="0" fill="none" stroke="#333" stroke-width="1.4"/>
<line x1="2017" y1="1637.5" x2="2027.5" y2="1637.5" stroke="#333" stroke-width="1.4"/>
<line x1="2017" y1="1641" x2="2027.5" y2="1641" stroke="#333" stroke-width="1.4"/>
<line x1="2017" y1="1644.5" x2="2027.5" y2="1644.5" stroke="#333" stroke-width="1.4"/>
<rect x="2088.5" y="1629" width="26.5" height="24.5" rx="0" fill="none" stroke="#333" stroke-width="2"/>
<path d="M2093 1629 L2093 1642 L2115 1642 M2101 1629 L2101 1642" fill="none" stroke="#333" stroke-width="1.6"/>
<line x1="2153.5" y1="1641.8" x2="2168.8" y2="1641.8" stroke="#555" stroke-width="1.6"/>
<line x1="2181.6" y1="1641.8" x2="2378.3" y2="1641.8" stroke="#777" stroke-width="1.6"/>
<rect x="2275" y="1631" width="9.8" height="21.7" rx="0" fill="#6a6a6a"/>
<line x1="2390" y1="1641.8" x2="2404.8" y2="1641.8" stroke="#555" stroke-width="1.6"/>
<line x1="2397.4" y1="1634.5" x2="2397.4" y2="1649" stroke="#555" stroke-width="1.6"/>
<text x="2430.52" y="1650.70" font-family="'Liberation Sans', sans-serif" font-size="22.61" fill="#242424" textLength="50.42" lengthAdjust="spacingAndGlyphs">100%</text>
<line x1="1576.5" y1="442" x2="1576.5" y2="1616" stroke="#d4d4d4" stroke-width="1.5"/>
<g transform="translate(1590.34,446.14) scale(0.7655)"><path d="M40 10 L45 10 Q51 10 53.5 18 Q55.5 24.5 60 25.5 L38 25.5 Z" fill="url(#cpD)"/><path d="M19 48.6 L42 48.6 L35 63.6 L31 63.6 Q27 63.6 26 58 Q24 50 19 48.6 Z" fill="url(#cpC)"/><path d="M48 25.5 L63 25.5 Q69 25.5 68.5 33 C67.5 45 63 57 58 61.5 Q55.5 63.6 52 63.6 L35 63.6 Z" fill="url(#cpB)"/><path d="M24 10 L47 10 L28.7 48.6 L15 48.6 Q9.5 48.6 10 42 C11 30 13.5 19 17.5 14 Q20.5 10 24 10 Z" fill="url(#cpA)"/></g>
<text x="1655.27" y="489.40" font-family="'Liberation Sans', sans-serif" font-size="30.72" fill="#242424" textLength="95.37" lengthAdjust="spacingAndGlyphs" stroke="#242424" stroke-width="1">Copilot</text>
<path d="M2377.5 472.5 L2391 486.5 L2404.5 472.5" fill="none" stroke="#242424" stroke-width="2.2"/>
<line x1="2446" y1="469" x2="2466" y2="489" stroke="#242424" stroke-width="2.2"/>
<line x1="2466" y1="469" x2="2446" y2="489" stroke="#242424" stroke-width="2.2"/>
<rect x="1597" y="520" width="878" height="1075" rx="0" fill="#ecebea"/>
<rect x="2453.7" y="530.6" width="21.3" height="620" rx="10.6" fill="#f0efee"/>
<rect x="2457" y="1031.7" width="14" height="32.3" rx="7" fill="#6e6e6e"/>
<rect x="1672.8" y="562.3" width="705" height="191.7" rx="17" fill="#c8e8d5"/>
<text x="1703.92" y="609.60" font-family="'Liberation Sans', sans-serif" font-size="29.57" fill="#242424" textLength="525.95" lengthAdjust="spacingAndGlyphs">Create a PivotTable showing the mean and</text>
<text x="1704.44" y="649.30" font-family="'Liberation Sans', sans-serif" font-size="29.57" fill="#242424" textLength="582.72" lengthAdjust="spacingAndGlyphs">standard deviation of bill length and bill depth.</text>
<text x="1703.12" y="689.10" font-family="'Liberation Sans', sans-serif" font-size="29.57" fill="#242424" textLength="589.20" lengthAdjust="spacingAndGlyphs">Place species along the rows and sex across the</text>
<text x="1704.18" y="728.90" font-family="'Liberation Sans', sans-serif" font-size="29.57" fill="#242424" textLength="112.19" lengthAdjust="spacingAndGlyphs">columns.</text>
<g transform="translate(1634.71,785.31) scale(0.7690)"><path d="M40 10 L45 10 Q51 10 53.5 18 Q55.5 24.5 60 25.5 L38 25.5 Z" fill="url(#cpD)"/><path d="M19 48.6 L42 48.6 L35 63.6 L31 63.6 Q27 63.6 26 58 Q24 50 19 48.6 Z" fill="url(#cpC)"/><path d="M48 25.5 L63 25.5 Q69 25.5 68.5 33 C67.5 45 63 57 58 61.5 Q55.5 63.6 52 63.6 L35 63.6 Z" fill="url(#cpB)"/><path d="M24 10 L47 10 L28.7 48.6 L15 48.6 Q9.5 48.6 10 42 C11 30 13.5 19 17.5 14 Q20.5 10 24 10 Z" fill="url(#cpA)"/></g>
<text x="1704.33" y="824.30" font-family="'Liberation Sans', sans-serif" font-size="26.81" fill="#242424" textLength="91.81" lengthAdjust="spacingAndGlyphs" stroke="#242424" stroke-width="0.9">Copilot</text>
<text x="1821.60" y="825.60" font-family="'Liberation Sans', sans-serif" font-size="23.19" fill="#616161" textLength="342.50" lengthAdjust="spacingAndGlyphs">AI-generated content may be incorrect</text>
<text x="1641.04" y="895.00" font-family="'Liberation Sans', sans-serif" font-size="29.42" fill="#242424" textLength="679.95" lengthAdjust="spacingAndGlyphs">To create a pivot table showing the mean and standard</text>
<text x="1640.46" y="935.00" font-family="'Liberation Sans', sans-serif" font-size="29.42" fill="#242424" textLength="747.23" lengthAdjust="spacingAndGlyphs">deviation of bill length and bill depth, with species along the</text>
<text x="1639.79" y="974.40" font-family="'Liberation Sans', sans-serif" font-size="29.42" fill="#242424" textLength="740.43" lengthAdjust="spacingAndGlyphs">rows and sex across the columns, the following steps will be</text>
<text x="1639.72" y="1014.40" font-family="'Liberation Sans', sans-serif" font-size="29.42" fill="#242424" textLength="139.90" lengthAdjust="spacingAndGlyphs">performed:</text>
<text x="1692.64" y="1092.10" font-family="'Liberation Sans', sans-serif" font-size="28.12" fill="#242424" textLength="22.95" lengthAdjust="spacingAndGlyphs">1.</text>
<text x="1719.93" y="1092.10" font-family="'Liberation Sans', sans-serif" font-size="28.12" fill="#242424" textLength="95.15" lengthAdjust="spacingAndGlyphs">Use the</text>
<text x="1821.00" y="1092.10" font-family="'Liberation Mono', monospace" font-size="26.52" fill="#242424" textLength="170.50" lengthAdjust="spacingAndGlyphs">pivot_table</text>
<text x="1999.58" y="1092.10" font-family="'Liberation Sans', sans-serif" font-size="28.12" fill="#242424" textLength="375.60" lengthAdjust="spacingAndGlyphs">function to calculate the mean</text>
<text x="1720.86" y="1134.40" font-family="'Liberation Sans', sans-serif" font-size="28.12" fill="#242424" textLength="645.77" lengthAdjust="spacingAndGlyphs">and standard deviation for bill length and bill depth.</text>
<text x="1693.37" y="1173.00" font-family="'Liberation Sans', sans-serif" font-size="28.12" fill="#242424" textLength="22.12" lengthAdjust="spacingAndGlyphs" clip-path="url(#msgclip)">2.</text>
<text x="1720.76" y="1173.00" font-family="'Liberation Sans', sans-serif" font-size="28.12" fill="#242424" textLength="564.79" lengthAdjust="spacingAndGlyphs" clip-path="url(#msgclip)">Set the index to 'species' and columns to 'sex'.</text>
<rect x="1650.5" y="1171.6" width="771" height="88.4" rx="16" fill="#ecebea" stroke="#9ad3b0" stroke-width="2"/>
<text x="1666.19" y="1210.00" font-family="'Liberation Sans', sans-serif" font-size="25.36" fill="#242424" textLength="735.31" lengthAdjust="spacingAndGlyphs">Create a pivot table showing the total count of penguins and average</text>
<text x="1665.86" y="1241.80" font-family="'Liberation Sans', sans-serif" font-size="25.36" fill="#242424" textLength="334.07" lengthAdjust="spacingAndGlyphs">body mass grouped by species.</text>
<rect x="1650.5" y="1279.8" width="771" height="87.5" rx="16" fill="#ecebea" stroke="#9ad3b0" stroke-width="2"/>
<text x="1667.28" y="1317.80" font-family="'Liberation Sans', sans-serif" font-size="25.36" fill="#242424" textLength="708.54" lengthAdjust="spacingAndGlyphs">Visualize the relationship between bill length and bill depth using a</text>
<text x="1666.67" y="1349.20" font-family="'Liberation Sans', sans-serif" font-size="25.36" fill="#242424" textLength="126.43" lengthAdjust="spacingAndGlyphs">scatter plot.</text>
<rect x="1642.5" y="1380" width="787" height="172" rx="16" fill="#ffffff" stroke="#d1d1d1" stroke-width="1.6"/>
<text x="1658.96" y="1436.00" font-family="'Liberation Sans', sans-serif" font-size="30.00" fill="#707070" textLength="466.93" lengthAdjust="spacingAndGlyphs">Type a message for advanced analysis</text>
<rect x="2091" y="1496" width="29" height="27" rx="3" fill="none" stroke="#333333" stroke-width="2"/>
<path d="M2092 1517 L2101 1507 L2112 1519 M2108 1514 L2112 1510 L2120 1518" fill="none" stroke="#333333" stroke-width="2"/>
<circle cx="2112" cy="1503" r="3" fill="none" stroke="#333333" stroke-width="1.8"/>
<circle cx="2095" cy="1493.5" r="7.5" fill="#333" stroke="#fff" stroke-width="1.5"/>
<line x1="2091" y1="1493.5" x2="2099" y2="1493.5" stroke="#fff" stroke-width="1.8"/>
<line x1="2095" y1="1489.5" x2="2095" y2="1497.5" stroke="#fff" stroke-width="1.8"/>
<path d="M2167 1492 L2170 1500 L2178 1503 L2170 1506 L2167 1514 L2164 1506 L2156 1503 L2164 1500 Z" fill="none" stroke="#333333" stroke-width="2" stroke-linejoin="round"/>
<path d="M2172 1512 L2186 1512 L2186 1523 L2166 1523 L2166 1518" fill="none" stroke="#333333" stroke-width="2"/>
<line x1="2174" y1="1515.5" x2="2182" y2="1515.5" stroke="#333333" stroke-width="1.8"/>
<line x1="2174" y1="1519.5" x2="2180" y2="1519.5" stroke="#333333" stroke-width="1.8"/>
<line x1="2183" y1="1491" x2="2183" y2="1497" stroke="#333333" stroke-width="1.5"/>
<line x1="2180" y1="1494" x2="2186" y2="1494" stroke="#333333" stroke-width="1.5"/>
<line x1="2154" y1="1522" x2="2154" y2="1527" stroke="#333333" stroke-width="1.5"/>
<line x1="2151.5" y1="1524.5" x2="2156.5" y2="1524.5" stroke="#333333" stroke-width="1.5"/>
<circle cx="2235" cy="1508" r="16" fill="none" stroke="#333333" stroke-width="2"/>
<ellipse cx="2235" cy="1508" rx="7" ry="16" fill="none" stroke="#333333" stroke-width="2"/>
<line x1="2219" y1="1508" x2="2251" y2="1508" stroke="#333333" stroke-width="2"/>
<line x1="2222" y1="1500" x2="2248" y2="1500" stroke="#333333" stroke-width="1.6"/>
<line x1="2222" y1="1516" x2="2248" y2="1516" stroke="#333333" stroke-width="1.6"/>
<line x1="2267.5" y1="1488" x2="2267.5" y2="1527.5" stroke="#c8c8c8" stroke-width="1.5"/>
<rect x="2302" y="1492" width="12" height="22" rx="6" fill="none" stroke="#333333" stroke-width="2"/>
<path d="M2296.5 1506 Q2296.5 1518 2308 1518 Q2319.5 1518 2319.5 1506 M2308 1518 L2308 1524" fill="none" stroke="#333333" stroke-width="2"/>
<path d="M2364 1494 L2397 1508 L2364 1522 L2369 1508 Z M2369 1508 L2385 1508" fill="none" stroke="#b8b8b8" stroke-width="2" stroke-linejoin="round"/>
<line x1="1537.3" y1="495.5" x2="1537.3" y2="1555.4" stroke="#d6d6d6" stroke-width="1.2"/>
<line x1="78.5" y1="1555.4" x2="1537.3" y2="1555.4" stroke="#d6d6d6" stroke-width="1.2"/>
</svg>
</body></html>
